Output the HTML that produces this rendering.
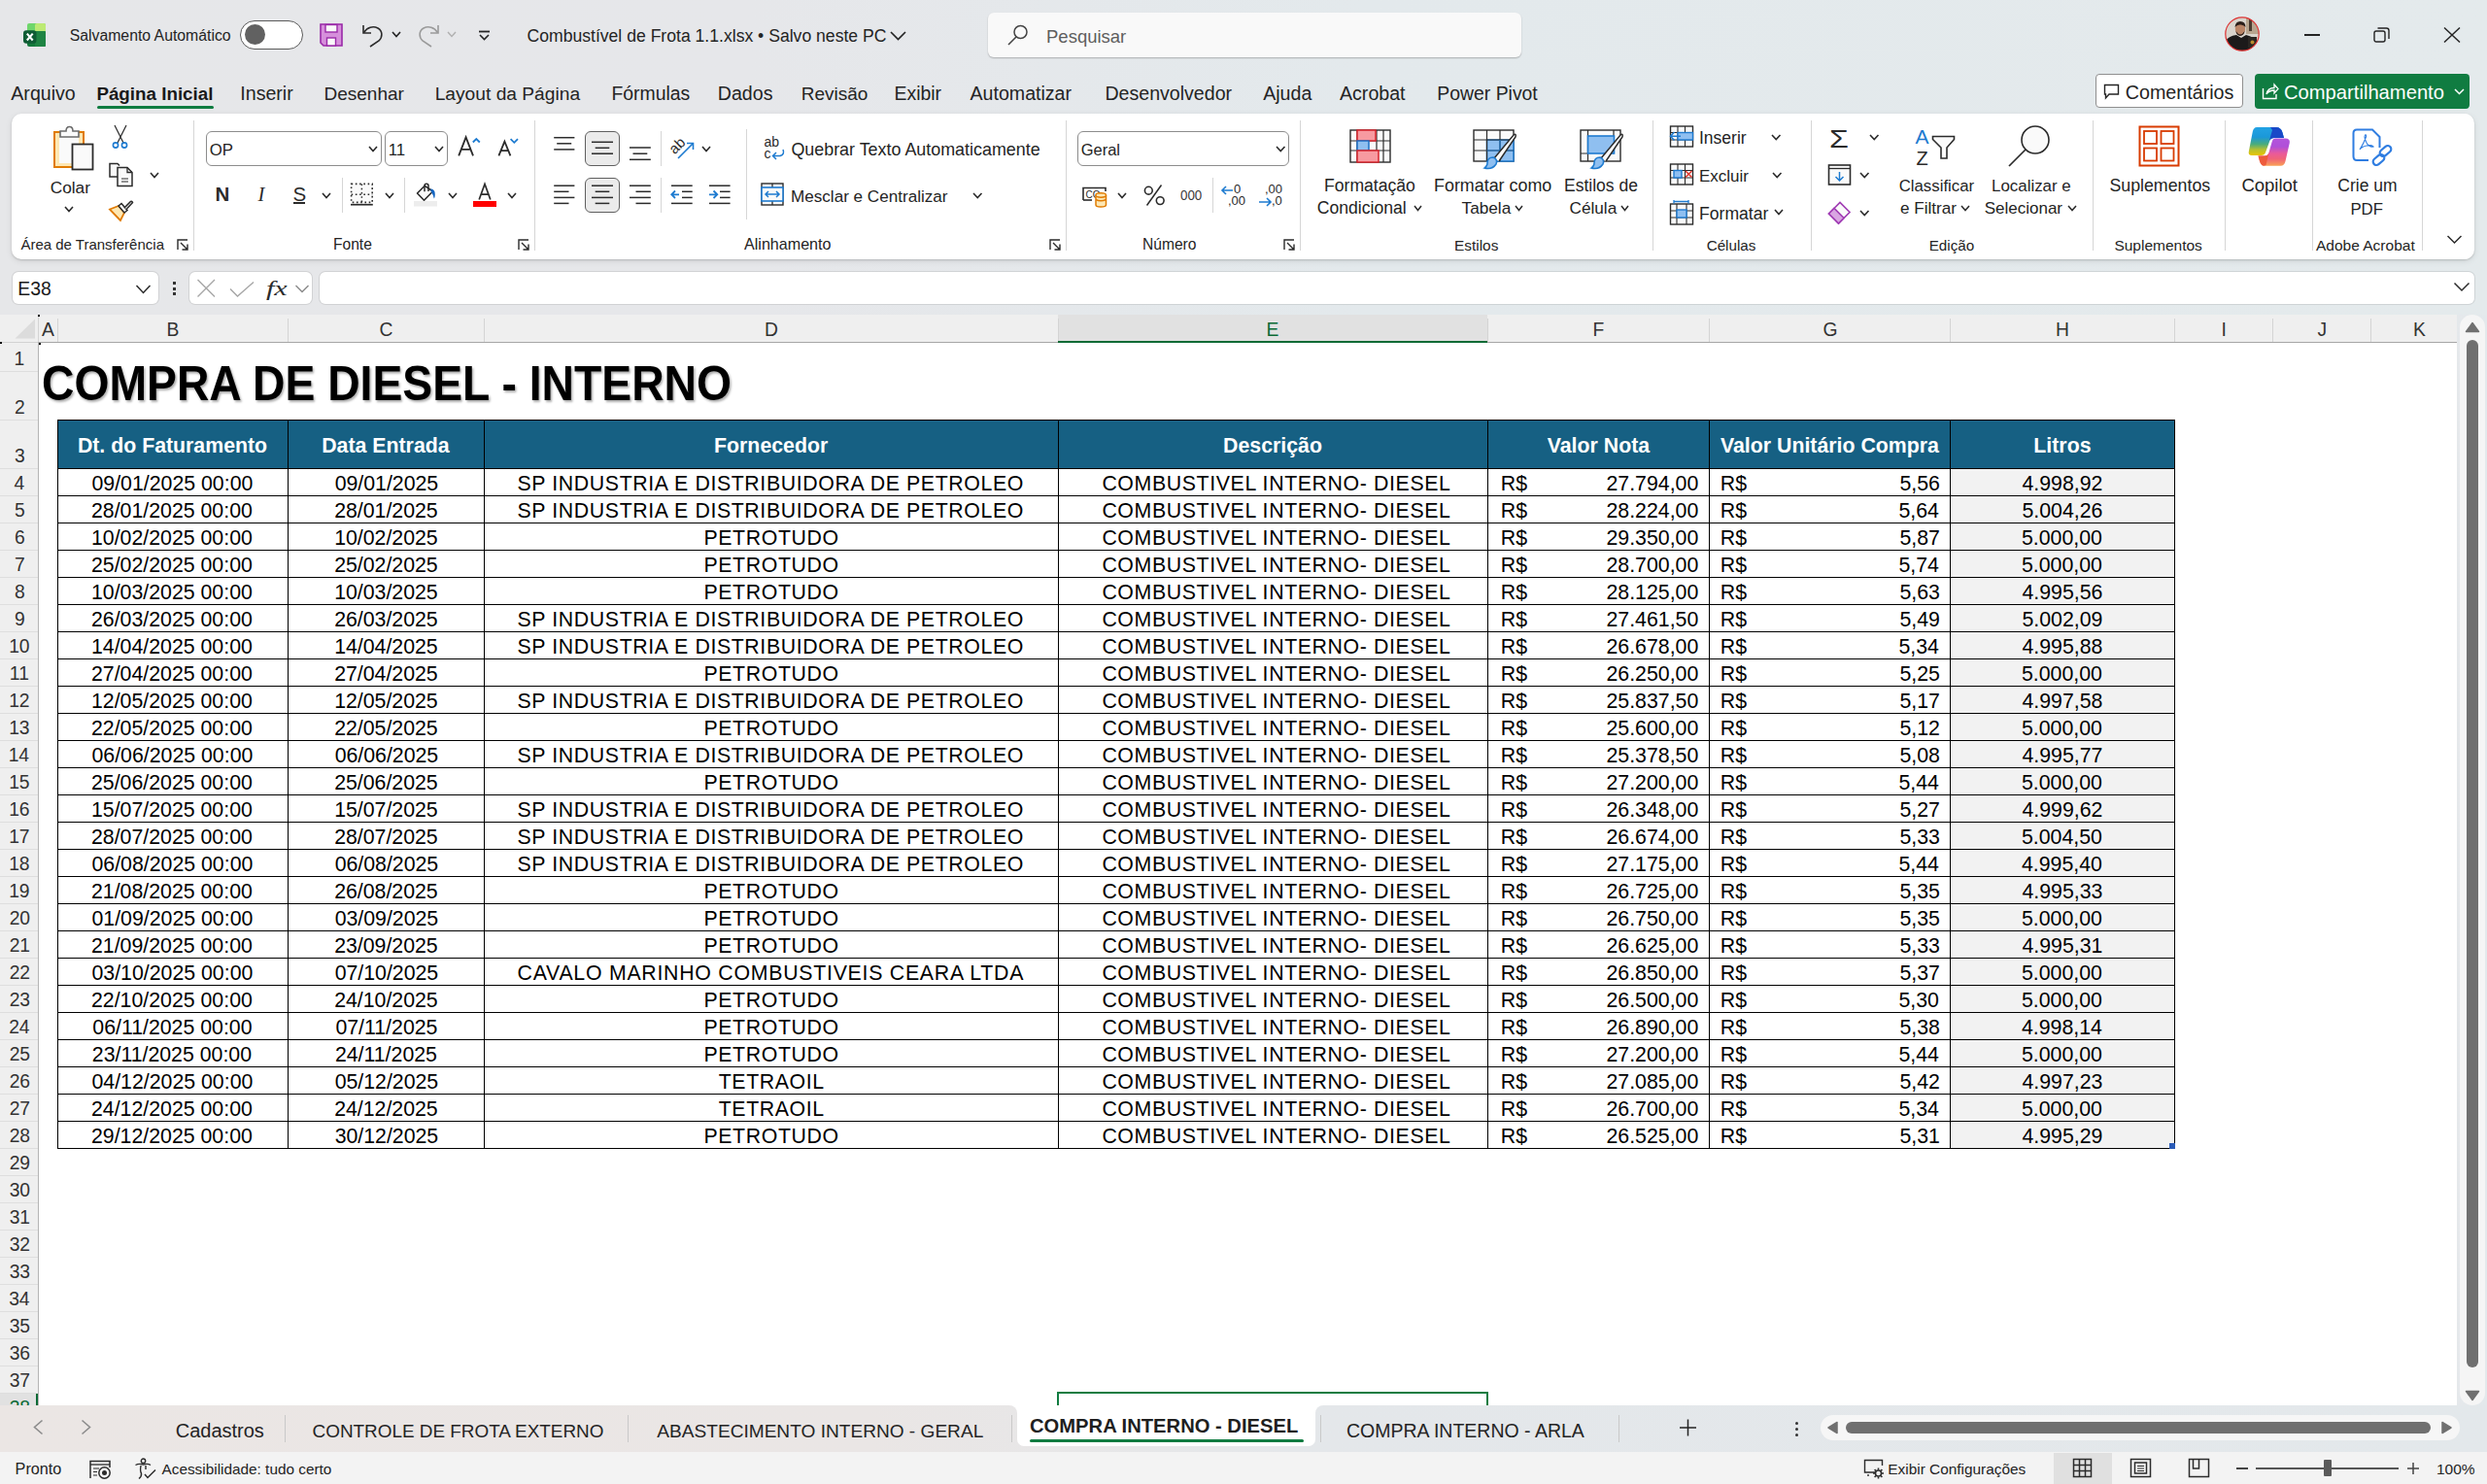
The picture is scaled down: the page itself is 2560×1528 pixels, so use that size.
<!DOCTYPE html><html><head><meta charset="utf-8"><style>
html,body{margin:0;padding:0;}
body{width:2560px;height:1528px;overflow:hidden;position:relative;background:linear-gradient(90deg,#e6e7e9 0%,#e6e7ea 30%,#e3e9ec 55%,#e4eaec 100%);font-family:'Liberation Sans',sans-serif;}
.t{position:absolute;white-space:pre;line-height:1;}
.r{position:absolute;}
.s{position:absolute;overflow:visible;}
</style></head><body><svg class="s" style="left:24px;top:24px;" width="24" height="24" viewBox="0 0 24 24">
<rect x="4" y="0" width="19" height="12" rx="2" fill="#6fd66b"/>
<rect x="12" y="0" width="11" height="12" rx="2" fill="#bdea74"/>
<rect x="4" y="8" width="19" height="16" rx="2" fill="#157a3c"/>
<rect x="12" y="8" width="11" height="16" rx="1" fill="#1f8443"/>
<rect x="0" y="7.3" width="13.5" height="13.5" rx="3" fill="#0f5c34"/>
<path d="M3.8 10.6 L9.7 17.5 M9.7 10.6 L3.8 17.5" stroke="#fff" stroke-width="2.1"/>
</svg><div class="t" style="left:71.70px;top:29px;font-size:15.8px;color:#242424;">Salvamento Automático</div><div class="r" style="left:247px;top:21px;width:63px;height:28px;border:1.2px solid #5a5a5a;border-radius:15px;background:#fff;"></div><div class="r" style="left:252px;top:25px;width:21px;height:21px;border-radius:50%;background:#616161;"></div><svg class="s" style="left:329px;top:24px;" width="24" height="24" viewBox="0 0 24 24">
<path d="M1 1 H23 V23 H4 L1 20 Z" fill="#d68fdb" stroke="#9a2aa8" stroke-width="1.6"/>
<rect x="6" y="1.5" width="12" height="7.5" fill="#fafafa" stroke="#9a2aa8" stroke-width="1.4"/>
<rect x="7.5" y="15" width="9" height="8" fill="#fafafa" stroke="#9a2aa8" stroke-width="1.4"/>
</svg><svg class="s" style="left:372px;top:23px;" width="24" height="26" viewBox="0 0 24 26"><path d="M2 3 V11 H10" fill="none" stroke="#2b2b2b" stroke-width="1.6"/>
<path d="M2.5 10.5 C6 5 12 3.5 17 6 C22 9 22 15 18 19 L9 25" fill="none" stroke="#2b2b2b" stroke-width="1.6"/></svg><svg class="s" style="left:403px;top:32px;" width="10" height="6.5" viewBox="0 0 10 6.5"><path d="M1 1 L5.0 5.5 L9 1" fill="none" stroke="#242424" stroke-width="1.6"/></svg><svg class="s" style="left:429px;top:23px;" width="24" height="26" viewBox="0 0 24 26"><path d="M22 3 V11 H14" fill="none" stroke="#9a9a9a" stroke-width="1.6"/>
<path d="M21.5 10.5 C18 5 12 3.5 7 6 C2 9 2 15 6 19 L15 25" fill="none" stroke="#9a9a9a" stroke-width="1.6"/></svg><svg class="s" style="left:460px;top:32px;" width="10" height="6.5" viewBox="0 0 10 6.5"><path d="M1 1 L5.0 5.5 L9 1" fill="none" stroke="#b0b0b0" stroke-width="1.4"/></svg><svg class="s" style="left:492px;top:31px;" width="14" height="11" viewBox="0 0 14 11"><path d="M1 1.5 H12" stroke="#242424" stroke-width="1.8"/><path d="M2 5 L6.5 9.5 L11 5" fill="none" stroke="#242424" stroke-width="1.6"/></svg><div class="t" style="left:542.50px;top:29px;font-size:17.6px;color:#242424;">Combustível de Frota 1.1.xlsx • Salvo neste PC</div><svg class="s" style="left:916px;top:32px;" width="17" height="9.5" viewBox="0 0 17 9.5"><path d="M1 1 L8.5 8.5 L16 1" fill="none" stroke="#242424" stroke-width="1.7"/></svg><div class="r" style="left:1017px;top:13px;width:549px;height:46px;border-radius:6px;background:#f9f9f9;box-shadow:0 1px 1.5px rgba(0,0,0,0.25);"></div><svg class="s" style="left:1036px;top:24px;" width="24" height="24" viewBox="0 0 24 24"><circle cx="14.5" cy="9" r="6.5" fill="none" stroke="#444" stroke-width="1.5"/><path d="M10 14 L2 22" stroke="#444" stroke-width="1.6"/></svg><div class="t" style="left:1077.00px;top:29px;font-size:18.5px;color:#5e5e5e;">Pesquisar</div><svg class="s" style="left:2290px;top:17px;" width="36" height="36" viewBox="0 0 36 36"><defs><clipPath id="av"><circle cx="18" cy="18" r="17.2"/></clipPath></defs>
<g clip-path="url(#av)"><rect width="36" height="36" fill="#d9d4cc"/><rect x="22" y="0" width="14" height="18" fill="#b7a58f"/><rect x="25" y="3" width="3" height="12" fill="#4a3b30"/>
<path d="M0 36 V26 Q4 20 12 19 L17 22 L22 19 Q30 21 36 27 V36 Z" fill="#1c1a1a"/>
<ellipse cx="16" cy="13" rx="5.2" ry="6.5" fill="#b98466"/><path d="M10.5 11 Q11 5 16 5 Q21.5 5 21.5 11 Q19 8 16 8.5 Q13 8 10.5 11 Z" fill="#2b1f1a"/>
<path d="M11.5 15 Q16 22 20.5 15 Q20 19.5 16 20 Q12 19.5 11.5 15 Z" fill="#2b1f1a"/>
<rect x="24" y="21" width="9" height="11" fill="#2a2622"/><circle cx="28.5" cy="26.5" r="2" fill="#b88a2e"/></g>
<circle cx="18" cy="18" r="17.2" fill="none" stroke="#d33" stroke-width="1.2"/></svg><div class="r" style="left:2372px;top:35px;width:16px;height:1.5px;background:#242424;"></div><svg class="s" style="left:2443px;top:28px;" width="17" height="16" viewBox="0 0 17 16"><rect x="1" y="4" width="11" height="11" rx="2" fill="none" stroke="#242424" stroke-width="1.4"/><path d="M4.5 1 H13.5 Q16 1 16 3.5 V12" fill="none" stroke="#242424" stroke-width="1.4"/></svg><svg class="s" style="left:2515px;top:28px;" width="18" height="16" viewBox="0 0 18 16"><path d="M1 0.5 L17 15.5 M17 0.5 L1 15.5" stroke="#242424" stroke-width="1.5"/></svg><div class="t" style="left:11.30px;top:87px;font-size:19.6px;color:#242424;">Arquivo</div><div class="t" style="left:99.40px;top:88px;font-size:18.8px;color:#1a1a1a;font-weight:700;">Página Inicial</div><div class="t" style="left:247.30px;top:87px;font-size:19.6px;color:#242424;">Inserir</div><div class="t" style="left:333.50px;top:87px;font-size:19.0px;color:#242424;">Desenhar</div><div class="t" style="left:447.70px;top:87px;font-size:19.2px;color:#242424;">Layout da Página</div><div class="t" style="left:629.40px;top:87px;font-size:19.4px;color:#242424;">Fórmulas</div><div class="t" style="left:738.80px;top:87px;font-size:19.6px;color:#242424;">Dados</div><div class="t" style="left:824.70px;top:87px;font-size:19.0px;color:#242424;">Revisão</div><div class="t" style="left:920.60px;top:87px;font-size:19.4px;color:#242424;">Exibir</div><div class="t" style="left:998.50px;top:87px;font-size:19.6px;color:#242424;">Automatizar</div><div class="t" style="left:1137.40px;top:87px;font-size:19.6px;color:#242424;">Desenvolvedor</div><div class="t" style="left:1300.20px;top:87px;font-size:19.6px;color:#242424;">Ajuda</div><div class="t" style="left:1379.00px;top:87px;font-size:19.6px;color:#242424;">Acrobat</div><div class="t" style="left:1479.30px;top:87px;font-size:19.4px;color:#242424;">Power Pivot</div><div class="r" style="left:100px;top:109px;width:120px;height:3px;background:#107c41;border-radius:2px;"></div><div class="r" style="left:2157px;top:76px;width:152px;height:35px;border:1px solid #8f8f8f;border-radius:4px;background:#fff;box-sizing:border-box;"></div><svg class="s" style="left:2165px;top:86px;" width="17" height="17" viewBox="0 0 17 17"><path d="M1.5 1.5 H15.5 V11 H6 L2.5 15 V11 H1.5 Z" fill="none" stroke="#242424" stroke-width="1.4"/></svg><div class="t" style="left:2187.80px;top:86px;font-size:19.7px;color:#242424;">Comentários</div><div class="r" style="left:2321px;top:76px;width:221px;height:36px;border-radius:4px;background:#107c41;"></div><svg class="s" style="left:2328px;top:85px;" width="18" height="18" viewBox="0 0 18 18"><path d="M1.5 6 V16.5 H15 V12" fill="none" stroke="#fff" stroke-width="1.4"/><path d="M5 12 C6 7 9 5.5 13 5.5 V2 L17 6.5 L13 11 V8 C10 8 7 9 5 12 Z" fill="none" stroke="#fff" stroke-width="1.3"/></svg><div class="t" style="left:2351.00px;top:85px;font-size:20.2px;color:#ffffff;">Compartilhamento</div><svg class="s" style="left:2526px;top:91px;" width="11" height="6.5" viewBox="0 0 11 6.5"><path d="M1 1 L5.5 5.5 L10 1" fill="none" stroke="#ffffff" stroke-width="1.5"/></svg><div class="r" style="left:12px;top:117px;width:2535px;height:150px;border-radius:10px;background:#fff;box-shadow:0 1px 2px rgba(0,0,0,0.16),0 2px 7px rgba(0,0,0,0.09);"></div><svg class="s" style="left:54px;top:129px;" width="44" height="47" viewBox="0 0 44 47">
<rect x="2" y="7" width="30" height="36" fill="#fde7b3" stroke="#e07b00" stroke-width="2"/>
<rect x="7" y="11" width="20" height="28" fill="#fafafa"/>
<path d="M8 12 V6 H14 Q14 1.5 17.5 1.5 Q21 1.5 21 6 H27 V12 Z" fill="#fafafa" stroke="#6b6b6b" stroke-width="1.6"/>
<rect x="20.5" y="19.5" width="21" height="26" fill="#fafafa" stroke="#2b2b2b" stroke-width="1.8"/>
</svg><div class="t" style="left:51.70px;top:185px;font-size:17.3px;color:#242424;">Colar</div><svg class="s" style="left:66px;top:212px;" width="10" height="6.5" viewBox="0 0 10 6.5"><path d="M1 1 L5.0 5.5 L9 1" fill="none" stroke="#2b2b2b" stroke-width="1.6"/></svg><svg class="s" style="left:114px;top:128px;" width="20" height="26" viewBox="0 0 20 26"><path d="M4 1 L13 19 M16 1 L7 19" stroke="#2b2b2b" stroke-width="1.2" fill="none"/>
<circle cx="5" cy="21.5" r="2.6" fill="none" stroke="#1e7bd0" stroke-width="1.6"/><circle cx="14" cy="21.5" r="2.6" fill="none" stroke="#1e7bd0" stroke-width="1.6"/></svg><svg class="s" style="left:111px;top:167px;" width="27" height="27" viewBox="0 0 27 27"><path d="M12 15 H2 V1.5 H10 L12 3.5" fill="#fafafa" stroke="#2b2b2b" stroke-width="1.5"/>
<path d="M10 5.5 H20 L25 10.5 V24.5 H10 Z" fill="#fafafa" stroke="#2b2b2b" stroke-width="1.5"/><path d="M20 5.5 V10.5 H25" fill="none" stroke="#2b2b2b" stroke-width="1.3"/>
<path d="M14 17 H21 M14 20 H21" stroke="#2b2b2b" stroke-width="1.2"/></svg><svg class="s" style="left:154px;top:177px;" width="10" height="6.5" viewBox="0 0 10 6.5"><path d="M1 1 L5.0 5.5 L9 1" fill="none" stroke="#2b2b2b" stroke-width="1.6"/></svg><svg class="s" style="left:111px;top:206px;" width="27" height="25" viewBox="0 0 27 25"><path d="M2 9.5 L11 6 L17 13 L13 21 Z" fill="#fde7b3" stroke="#e07b00" stroke-width="1.8"/>
<path d="M2 9.5 L13 21" stroke="#e07b00" stroke-width="1.2"/>
<path d="M11 6 L17 13 L20 10.5 L14 3.5 Z" fill="#fafafa" stroke="#2b2b2b" stroke-width="1.5"/>
<path d="M17 8 L23.5 1.5 Q25 1 25.5 2.5 L19.5 9" fill="#fafafa" stroke="#2b2b2b" stroke-width="1.5"/></svg><div class="t" style="left:21.40px;top:244px;font-size:15.0px;color:#242424;">Área de Transferência</div><svg class="s" style="left:182px;top:246px;" width="12" height="12" viewBox="0 0 12 12"><path d="M1 11 V1 H11" fill="none" stroke="#2b2b2b" stroke-width="1.4"/><path d="M4 4 L11 11 M11 5.5 V11 H5.5" fill="none" stroke="#2b2b2b" stroke-width="1.4"/></svg><div class="r" style="left:199px;top:124px;width:1px;height:134px;background:#d6d6d6;"></div><div class="r" style="left:212px;top:135px;width:181px;height:36px;border:1px solid #8c8c8c;border-radius:6px;box-sizing:border-box;background:#fff;"></div><div class="t" style="left:215.70px;top:147px;font-size:16.8px;color:#242424;">OP</div><svg class="s" style="left:379px;top:150px;" width="10" height="6.5" viewBox="0 0 10 6.5"><path d="M1 1 L5.0 5.5 L9 1" fill="none" stroke="#2b2b2b" stroke-width="1.6"/></svg><div class="r" style="left:396px;top:135px;width:65px;height:36px;border:1px solid #8c8c8c;border-radius:6px;box-sizing:border-box;background:#fff;"></div><div class="t" style="left:399.70px;top:147px;font-size:16.8px;color:#242424;">11</div><svg class="s" style="left:447px;top:150px;" width="10" height="6.5" viewBox="0 0 10 6.5"><path d="M1 1 L5.0 5.5 L9 1" fill="none" stroke="#2b2b2b" stroke-width="1.6"/></svg><svg class="s" style="left:462px;top:132px;" width="80" height="40" viewBox="0 0 80 40"><path d="M10.2 28.3 L17.6 9.3 L25 28.3 M12.9 21.9 H22.3" fill="none" stroke="#2b2b2b" stroke-width="1.8"/>
<path d="M24.8 14.5 L28.3 11 L31.8 14.5" fill="none" stroke="#1e7bd0" stroke-width="1.8"/>
<path d="M51.4 28.3 L57.4 13.6 L63.4 28.3 M53.5 23.2 H61.3" fill="none" stroke="#2b2b2b" stroke-width="1.8"/>
<path d="M63.6 11.2 L67.3 14.8 L71 11.2" fill="none" stroke="#1e7bd0" stroke-width="1.8"/></svg><div class="t" style="left:221.50px;top:190px;font-size:20.5px;color:#2b2b2b;font-weight:700;">N</div><div class="t" style="left:265.50px;top:190px;font-size:20.5px;color:#2b2b2b;font-style:italic;font-family:'Liberation Serif';">I</div><div class="t" style="left:301.50px;top:190px;font-size:20.5px;color:#2b2b2b;">S</div><div class="r" style="left:302px;top:208px;width:12px;height:1.6px;background:#2b2b2b;"></div><svg class="s" style="left:331px;top:198px;" width="10" height="6.5" viewBox="0 0 10 6.5"><path d="M1 1 L5.0 5.5 L9 1" fill="none" stroke="#2b2b2b" stroke-width="1.6"/></svg><div class="r" style="left:352px;top:183px;width:1px;height:36px;background:#d6d6d6;"></div><svg class="s" style="left:358px;top:186px;" width="30" height="30" viewBox="0 0 30 30"><g stroke="#2b2b2b" stroke-width="1.6" stroke-dasharray="1.6 2.65" fill="#fafafa"><rect x="3.6" y="3.4" width="21.6" height="19"/></g>
<g stroke="#2b2b2b" stroke-width="1.5" stroke-dasharray="1.6 2.65" fill="none"><path d="M14.4 3.4 V22.4 M3.6 14.2 H25.2"/></g>
<path d="M3 24.7 H25.8" stroke="#2b2b2b" stroke-width="1.7"/></svg><svg class="s" style="left:396px;top:198px;" width="10" height="6.5" viewBox="0 0 10 6.5"><path d="M1 1 L5.0 5.5 L9 1" fill="none" stroke="#2b2b2b" stroke-width="1.6"/></svg><div class="r" style="left:416px;top:183px;width:1px;height:36px;background:#d6d6d6;"></div><svg class="s" style="left:426px;top:186px;" width="26" height="28" viewBox="0 0 26 28"><path d="M3.5 13 L11.2 5.3 L19.6 11 L10.5 20.3 Z" fill="#fafafa" stroke="#2b2b2b" stroke-width="1.6" stroke-linejoin="round"/>
<path d="M11 11.3 V5.3 Q11 3.2 13 3.2 Q15 3.2 15 5.3 V11" fill="none" stroke="#2b2b2b" stroke-width="1.5"/>
<path d="M17 8.5 Q21.8 8.5 21.8 14 Q21.8 17 20.8 18.5 Q20.2 15 17.8 11.5 Z" fill="#1565c0"/>
<rect x="0" y="21" width="24" height="5.5" fill="#ededed"/></svg><svg class="s" style="left:461.4px;top:198px;" width="10" height="6.5" viewBox="0 0 10 6.5"><path d="M1 1 L5.0 5.5 L9 1" fill="none" stroke="#2b2b2b" stroke-width="1.6"/></svg><svg class="s" style="left:488px;top:186px;" width="22" height="22" viewBox="0 0 22 22"><path d="M5.2 19.5 L11 3.4 L16.8 19.5 M7.3 14.1 H14.7" fill="none" stroke="#2b2b2b" stroke-width="1.7"/></svg><div class="r" style="left:487px;top:207px;width:24px;height:5.5px;background:#ff0000;"></div><svg class="s" style="left:522px;top:198px;" width="10" height="6.5" viewBox="0 0 10 6.5"><path d="M1 1 L5.0 5.5 L9 1" fill="none" stroke="#2b2b2b" stroke-width="1.6"/></svg><div class="t" style="left:343.00px;top:244px;font-size:15.6px;color:#242424;">Fonte</div><svg class="s" style="left:533px;top:246px;" width="12" height="12" viewBox="0 0 12 12"><path d="M1 11 V1 H11" fill="none" stroke="#2b2b2b" stroke-width="1.4"/><path d="M4 4 L11 11 M11 5.5 V11 H5.5" fill="none" stroke="#2b2b2b" stroke-width="1.4"/></svg><div class="r" style="left:550px;top:124px;width:1px;height:134px;background:#d6d6d6;"></div><div class="r" style="left:602px;top:135px;width:36px;height:36px;border:1px solid #5f5f5f;border-radius:6px;box-sizing:border-box;background:#ebebeb;"></div><div class="r" style="left:602px;top:183px;width:36px;height:36px;border:1px solid #5f5f5f;border-radius:6px;box-sizing:border-box;background:#ebebeb;"></div><svg class="s" style="left:560px;top:130px;" width="200" height="100" viewBox="0 0 200 100"><path d="M10.2 11.7 H31.4" stroke="#2b2b2b" stroke-width="1.5"/><path d="M13.2 17.8 H28.2" stroke="#2b2b2b" stroke-width="1.5"/><path d="M10.2 23.9 H31.4" stroke="#2b2b2b" stroke-width="1.5"/><path d="M49 16.3 H71" stroke="#2b2b2b" stroke-width="1.5"/><path d="M52.7 22.3 H67.3" stroke="#2b2b2b" stroke-width="1.5"/><path d="M49 28.2 H71" stroke="#2b2b2b" stroke-width="1.5"/><path d="M88 22 H109.8" stroke="#2b2b2b" stroke-width="1.5"/><path d="M91.5 28.2 H106.3" stroke="#2b2b2b" stroke-width="1.5"/><path d="M88 34.3 H109.8" stroke="#2b2b2b" stroke-width="1.5"/><path d="M10.2 61.2 H31.4" stroke="#2b2b2b" stroke-width="1.5"/><path d="M10.2 67.3 H25.5" stroke="#2b2b2b" stroke-width="1.5"/><path d="M10.2 73.4 H31.4" stroke="#2b2b2b" stroke-width="1.5"/><path d="M10.2 79.4 H25.5" stroke="#2b2b2b" stroke-width="1.5"/><path d="M49 61.2 H71" stroke="#2b2b2b" stroke-width="1.5"/><path d="M52.7 67.3 H67.3" stroke="#2b2b2b" stroke-width="1.5"/><path d="M49 73.4 H71" stroke="#2b2b2b" stroke-width="1.5"/><path d="M52.7 79.4 H67.3" stroke="#2b2b2b" stroke-width="1.5"/><path d="M88 61.2 H109.8" stroke="#2b2b2b" stroke-width="1.5"/><path d="M94.5 67.3 H109.8" stroke="#2b2b2b" stroke-width="1.5"/><path d="M88 73.4 H109.8" stroke="#2b2b2b" stroke-width="1.5"/><path d="M94.5 79.4 H109.8" stroke="#2b2b2b" stroke-width="1.5"/><path d="M131 61.2 H152.7" stroke="#2b2b2b" stroke-width="1.5"/><path d="M142 67.3 H152.7" stroke="#2b2b2b" stroke-width="1.5"/><path d="M142 73.4 H152.7" stroke="#2b2b2b" stroke-width="1.5"/><path d="M131 79.4 H152.7" stroke="#2b2b2b" stroke-width="1.5"/><path d="M170 61.2 H191.6" stroke="#2b2b2b" stroke-width="1.5"/><path d="M181 67.3 H191.6" stroke="#2b2b2b" stroke-width="1.5"/><path d="M181 73.4 H191.6" stroke="#2b2b2b" stroke-width="1.5"/><path d="M170 79.4 H191.6" stroke="#2b2b2b" stroke-width="1.5"/><path d="M131.5 70.3 H139 M135 66.5 L131.3 70.3 L135 74" fill="none" stroke="#1e7bd0" stroke-width="1.8"/><path d="M170 70.3 H178 M174.5 66.5 L178.3 70.3 L174.5 74" fill="none" stroke="#1e7bd0" stroke-width="1.8"/></svg><div class="r" style="left:680px;top:135px;width:1px;height:36px;background:#d6d6d6;"></div><div class="r" style="left:680px;top:183px;width:1px;height:36px;background:#d6d6d6;"></div><svg class="s" style="left:689px;top:140px;" width="28" height="26" viewBox="0 0 28 26"><text x="0" y="0" transform="translate(5.5 19.5) rotate(-45)" font-family="Liberation Sans" font-size="15" fill="#2b2b2b">ab</text>
<path d="M9 23 L24 8 M18 7.5 H24.5 V14" fill="none" stroke="#1e7bd0" stroke-width="1.6"/></svg><svg class="s" style="left:722px;top:150px;" width="10" height="6.5" viewBox="0 0 10 6.5"><path d="M1 1 L5.0 5.5 L9 1" fill="none" stroke="#2b2b2b" stroke-width="1.6"/></svg><div class="r" style="left:768px;top:133px;width:1px;height:93px;background:#d6d6d6;"></div><svg class="s" style="left:786px;top:140px;" width="24" height="26" viewBox="0 0 24 26"><text x="0.5" y="11" font-family="Liberation Sans" font-size="14" fill="#2b2b2b">ab</text><text x="0.5" y="22.5" font-family="Liberation Sans" font-size="14" fill="#2b2b2b">c</text>
<path d="M20 14 Q22 19 17 20.5 H10 M13 17 L9.5 20.5 L13 24" fill="none" stroke="#1e7bd0" stroke-width="1.5"/></svg><div class="t" style="left:814.40px;top:146px;font-size:17.9px;color:#242424;">Quebrar Texto Automaticamente</div><svg class="s" style="left:783px;top:188px;" width="26" height="25" viewBox="0 0 26 25"><rect x="1" y="1" width="22" height="22" fill="#fafafa" stroke="#2b2b2b" stroke-width="1.4"/><path d="M12 1 V5 M12 19 V23" stroke="#2b2b2b" stroke-width="1.3"/>
<rect x="1" y="5" width="22" height="14" fill="#fafafa" stroke="#1e7bd0" stroke-width="1.6"/>
<path d="M5 12 H19 M8 9 L5 12 L8 15 M16 9 L19 12 L16 15" fill="none" stroke="#1e7bd0" stroke-width="1.5"/></svg><div class="t" style="left:814.00px;top:194px;font-size:17.1px;color:#242424;">Mesclar e Centralizar</div><svg class="s" style="left:1001px;top:198px;" width="10.5" height="6.5" viewBox="0 0 10.5 6.5"><path d="M1 1 L5.25 5.5 L9.5 1" fill="none" stroke="#2b2b2b" stroke-width="1.6"/></svg><div class="t" style="left:766.00px;top:243px;font-size:16.1px;color:#242424;">Alinhamento</div><svg class="s" style="left:1080px;top:246px;" width="12" height="12" viewBox="0 0 12 12"><path d="M1 11 V1 H11" fill="none" stroke="#2b2b2b" stroke-width="1.4"/><path d="M4 4 L11 11 M11 5.5 V11 H5.5" fill="none" stroke="#2b2b2b" stroke-width="1.4"/></svg><div class="r" style="left:1097px;top:124px;width:1px;height:134px;background:#d6d6d6;"></div><div class="r" style="left:1109px;top:135px;width:218px;height:36px;border:1px solid #8c8c8c;border-radius:6px;box-sizing:border-box;background:#fff;"></div><div class="t" style="left:1112.70px;top:146px;font-size:16.5px;color:#242424;">Geral</div><svg class="s" style="left:1313px;top:150px;" width="10.5" height="6.5" viewBox="0 0 10.5 6.5"><path d="M1 1 L5.25 5.5 L9.5 1" fill="none" stroke="#2b2b2b" stroke-width="1.6"/></svg><svg class="s" style="left:1114px;top:192px;" width="28" height="22" viewBox="0 0 28 22"><path d="M1 14 V1.5 H24 V5" fill="none" stroke="#2b2b2b" stroke-width="1.6"/><path d="M1 14 H10" stroke="#2b2b2b" stroke-width="1.6"/>
<text x="3.5" y="12" font-family="Liberation Sans" font-size="10" fill="#2b2b2b">CO</text>
<g fill="#fde7b3" stroke="#e07b00" stroke-width="1.5"><path d="M14 9 V19 Q14 21 19 21 Q24.5 21 24.5 19 V9"/><ellipse cx="19.2" cy="9" rx="5.3" ry="2.2"/><path d="M14 13.5 Q19 16 24.5 13.5" fill="none"/></g></svg><svg class="s" style="left:1150px;top:198px;" width="10" height="6.5" viewBox="0 0 10 6.5"><path d="M1 1 L5.0 5.5 L9 1" fill="none" stroke="#2b2b2b" stroke-width="1.6"/></svg><svg class="s" style="left:1174px;top:188px;" width="28" height="26" viewBox="0 0 28 26"><circle cx="8.3" cy="8.2" r="3.9" fill="none" stroke="#2b2b2b" stroke-width="1.6"/><circle cx="20.2" cy="18.6" r="3.9" fill="none" stroke="#2b2b2b" stroke-width="1.6"/><path d="M6.5 23.5 L21.5 2.5" stroke="#2b2b2b" stroke-width="1.5"/></svg><div class="t" style="left:1215.40px;top:193px;font-size:15.5px;color:#3c3c3c;transform:scaleX(0.8613);transform-origin:0 0;">000</div><div class="r" style="left:1248px;top:183px;width:1px;height:36px;background:#d6d6d6;"></div><svg class="s" style="left:1256px;top:188px;" width="28" height="26" viewBox="0 0 28 26"><text x="14" y="11" font-family="Liberation Sans" font-size="13" fill="#2b2b2b">0</text><text x="8" y="23" font-family="Liberation Sans" font-size="13" fill="#2b2b2b">,00</text>
<path d="M2 8 H13 M6 4 L2 8 L6 12" fill="none" stroke="#1e7bd0" stroke-width="1.6"/></svg><svg class="s" style="left:1295px;top:188px;" width="28" height="26" viewBox="0 0 28 26"><text x="7" y="11" font-family="Liberation Sans" font-size="13" fill="#2b2b2b">,00</text><text x="14" y="23" font-family="Liberation Sans" font-size="13" fill="#2b2b2b">,0</text>
<path d="M1 20 H13 M9 16 L13 20 L9 24" fill="none" stroke="#1e7bd0" stroke-width="1.6"/></svg><div class="t" style="left:1176.00px;top:244px;font-size:15.6px;color:#242424;">Número</div><svg class="s" style="left:1321px;top:246px;" width="12" height="12" viewBox="0 0 12 12"><path d="M1 11 V1 H11" fill="none" stroke="#2b2b2b" stroke-width="1.4"/><path d="M4 4 L11 11 M11 5.5 V11 H5.5" fill="none" stroke="#2b2b2b" stroke-width="1.4"/></svg><div class="r" style="left:1338px;top:124px;width:1px;height:134px;background:#d6d6d6;"></div><svg class="s" style="left:1389px;top:133px;" width="44" height="36" viewBox="0 0 44 36"><g fill="#fafafa" stroke="#2b2b2b" stroke-width="1.4"><rect x="1" y="1" width="41" height="33"/></g>
<path d="M8 1 V34 M28 1 V34 M35 1 V34 M1 12 H42 M1 22 H42" stroke="#2b2b2b" stroke-width="1.2"/>
<rect x="8" y="1" width="19" height="11" fill="#f79aa0" stroke="#d8242c" stroke-width="1.5"/>
<rect x="8" y="12" width="12" height="10" fill="#8fbff0" stroke="#1e6fc4" stroke-width="1.5"/>
<rect x="8" y="22" width="22" height="12" fill="#f79aa0" stroke="#d8242c" stroke-width="1.5"/></svg><div class="t" style="left:1363.00px;top:183px;font-size:17.6px;color:#242424;">Formatação</div><div class="t" style="left:1355.80px;top:206px;font-size:17.6px;color:#242424;">Condicional</div><svg class="s" style="left:1454.5px;top:210.5px;" width="9" height="6.5" viewBox="0 0 9 6.5"><path d="M1 1 L4.5 5.5 L8 1" fill="none" stroke="#2b2b2b" stroke-width="1.5"/></svg><svg class="s" style="left:1516px;top:133px;" width="47" height="43" viewBox="0 0 47 43"><rect x="1" y="1" width="41" height="32" fill="#fafafa" stroke="#2b2b2b" stroke-width="1.4"/>
<rect x="14.5" y="11" width="27.5" height="22" fill="#8fbff0" stroke="#1e7bd0" stroke-width="1.5"/>
<path d="M14.5 1 V33 M28 1 V33 M1 11 H42 M1 22 H42" stroke="#2b2b2b" stroke-width="1.2"/>
<path d="M28 33 V11 M14.5 22 H42" stroke="#1e7bd0" stroke-width="1.2"/>
<path d="M22 30 L42 6 Q45 4 44 8 L27 33" fill="#fafafa" stroke="#2b2b2b" stroke-width="1.5"/>
<path d="M12 40 Q20 42 24 36 Q26 31 21 29 Q15 29 15 35 Q15 38 12 40 Z" fill="#8fbff0" stroke="#1e7bd0" stroke-width="1.5"/></svg><div class="t" style="left:1476.00px;top:183px;font-size:17.9px;color:#242424;">Formatar como</div><div class="t" style="left:1504.60px;top:206px;font-size:17.2px;color:#242424;">Tabela</div><svg class="s" style="left:1559px;top:210.5px;" width="9" height="6.5" viewBox="0 0 9 6.5"><path d="M1 1 L4.5 5.5 L8 1" fill="none" stroke="#2b2b2b" stroke-width="1.5"/></svg><svg class="s" style="left:1626px;top:133px;" width="47" height="43" viewBox="0 0 47 43"><rect x="1" y="1" width="41" height="32" fill="#fafafa" stroke="#2b2b2b" stroke-width="1.4"/>
<path d="M8.5 1 V33 M35 1 V11 M1 25 H8.5" stroke="#2b2b2b" stroke-width="1.2"/>
<rect x="8.5" y="7" width="27" height="18" fill="#8fbff0" stroke="#1e7bd0" stroke-width="1.6"/>
<path d="M22 30 L42 6 Q45 4 44 8 L27 33" fill="#fafafa" stroke="#2b2b2b" stroke-width="1.5"/>
<path d="M12 40 Q20 42 24 36 Q26 31 21 29 Q15 29 15 35 Q15 38 12 40 Z" fill="#8fbff0" stroke="#1e7bd0" stroke-width="1.5"/></svg><div class="t" style="left:1610.00px;top:183px;font-size:17.5px;color:#242424;">Estilos de</div><div class="t" style="left:1615.50px;top:206px;font-size:17.2px;color:#242424;">Célula</div><svg class="s" style="left:1667.5px;top:210.5px;" width="9" height="6.5" viewBox="0 0 9 6.5"><path d="M1 1 L4.5 5.5 L8 1" fill="none" stroke="#2b2b2b" stroke-width="1.5"/></svg><div class="t" style="left:1497.00px;top:245px;font-size:15.4px;color:#242424;">Estilos</div><div class="r" style="left:1701px;top:124px;width:1px;height:134px;background:#d6d6d6;"></div><svg class="s" style="left:1718px;top:129px;" width="27" height="24" viewBox="0 0 27 24"><rect x="1.5" y="1" width="23" height="21" fill="#fafafa" stroke="#2b2b2b" stroke-width="1.4"/>
<path d="M9 1 V22 M16.5 1 V22 M1.5 7.5 H24.5 M1.5 15 H24.5" stroke="#2b2b2b" stroke-width="1.1"/>
<rect x="9" y="7.5" width="15.5" height="7.5" fill="#8fbff0" stroke="#1e7bd0" stroke-width="1.4"/>
<path d="M1.5 11.2 H12 M5.5 7 L1.5 11.2 L5.5 15.5" fill="none" stroke="#1e7bd0" stroke-width="1.5"/></svg><div class="t" style="left:1749.00px;top:134px;font-size:17.5px;color:#242424;">Inserir</div><svg class="s" style="left:1823px;top:138px;" width="10.5" height="6.5" viewBox="0 0 10.5 6.5"><path d="M1 1 L5.25 5.5 L9.5 1" fill="none" stroke="#2b2b2b" stroke-width="1.6"/></svg><svg class="s" style="left:1718px;top:168px;" width="27" height="24" viewBox="0 0 27 24"><rect x="1.5" y="1" width="23" height="21" fill="#fafafa" stroke="#2b2b2b" stroke-width="1.4"/>
<path d="M9 1 V22 M16.5 1 V22 M1.5 7.5 H24.5 M1.5 15 H24.5" stroke="#2b2b2b" stroke-width="1.1"/>
<rect x="5" y="7.5" width="8" height="7.5" fill="#8fbff0" stroke="#1e7bd0" stroke-width="1.4"/>
<path d="M17 8 L23.5 14.5 M23.5 8 L17 14.5" stroke="#e0362c" stroke-width="1.5"/></svg><div class="t" style="left:1749.00px;top:173px;font-size:17.0px;color:#242424;">Excluir</div><svg class="s" style="left:1824px;top:177px;" width="10.5" height="6.5" viewBox="0 0 10.5 6.5"><path d="M1 1 L5.25 5.5 L9.5 1" fill="none" stroke="#2b2b2b" stroke-width="1.6"/></svg><svg class="s" style="left:1718px;top:206px;" width="27" height="26" viewBox="0 0 27 26"><rect x="1.5" y="4" width="23" height="21" fill="#fafafa" stroke="#2b2b2b" stroke-width="1.4"/>
<path d="M8 4 V25 M18 4 V25 M1.5 11 H24.5 M1.5 18 H24.5" stroke="#2b2b2b" stroke-width="1.1"/>
<rect x="8" y="10" width="10" height="8" fill="#8fbff0" stroke="#1e7bd0" stroke-width="1.4"/>
<path d="M5 1.5 H20 M5 0 V3.5 M20 0 V3.5" stroke="#1e7bd0" stroke-width="1.3"/></svg><div class="t" style="left:1749.00px;top:212px;font-size:17.6px;color:#242424;">Formatar</div><svg class="s" style="left:1826px;top:215px;" width="10" height="6.5" viewBox="0 0 10 6.5"><path d="M1 1 L5.0 5.5 L9 1" fill="none" stroke="#2b2b2b" stroke-width="1.6"/></svg><div class="t" style="left:1756.70px;top:245px;font-size:15.2px;color:#242424;">Células</div><div class="r" style="left:1864px;top:124px;width:1px;height:134px;background:#d6d6d6;"></div><div class="t" style="left:1883.41px;top:131px;font-size:25px;color:#2b2b2b;transform:scaleX(1.2857);transform-origin:0 0;">Σ</div><svg class="s" style="left:1924px;top:138px;" width="10.5" height="6.5" viewBox="0 0 10.5 6.5"><path d="M1 1 L5.25 5.5 L9.5 1" fill="none" stroke="#2b2b2b" stroke-width="1.6"/></svg><svg class="s" style="left:1881px;top:169px;" width="26" height="23" viewBox="0 0 26 23"><rect x="1.5" y="1" width="22" height="20" fill="#fafafa" stroke="#2b2b2b" stroke-width="1.6"/><path d="M1.5 4.5 H23.5" stroke="#2b2b2b" stroke-width="1.3"/>
<path d="M12.5 8 V17 M8.5 13 L12.5 17 L16.5 13" fill="none" stroke="#1e7bd0" stroke-width="1.5"/></svg><svg class="s" style="left:1914px;top:177px;" width="10.5" height="6.5" viewBox="0 0 10.5 6.5"><path d="M1 1 L5.25 5.5 L9.5 1" fill="none" stroke="#2b2b2b" stroke-width="1.6"/></svg><svg class="s" style="left:1881px;top:207px;" width="25" height="25" viewBox="0 0 25 25"><path d="M1.5 13 L13 1.5 L23 11.5 L11.5 23 Z" fill="#fafafa" stroke="#a03cb4" stroke-width="1.6"/>
<path d="M1.5 13 L7 7.5 L17 17.5 L11.5 23 Z" fill="#d9a6e2" stroke="#a03cb4" stroke-width="1.6"/></svg><svg class="s" style="left:1914px;top:215.5px;" width="10.5" height="6.5" viewBox="0 0 10.5 6.5"><path d="M1 1 L5.25 5.5 L9.5 1" fill="none" stroke="#2b2b2b" stroke-width="1.6"/></svg><div class="t" style="left:1971.50px;top:130px;font-size:21px;color:#1e7bd0;">A</div><div class="t" style="left:1972.50px;top:153px;font-size:20px;color:#2b2b2b;">Z</div><svg class="s" style="left:1988px;top:139px;" width="26" height="26" viewBox="0 0 26 26"><path d="M1.5 1.5 H23.5 V4.5 L16 13 V24 H10 V13 L1.5 4.5 Z" fill="#fafafa" stroke="#2b2b2b" stroke-width="1.6"/></svg><div class="t" style="left:1954.70px;top:184px;font-size:16.8px;color:#242424;">Classificar</div><div class="t" style="left:1956.00px;top:206px;font-size:17.1px;color:#242424;">e Filtrar</div><svg class="s" style="left:2018px;top:210.5px;" width="10" height="6.5" viewBox="0 0 10 6.5"><path d="M1 1 L5.0 5.5 L9 1" fill="none" stroke="#2b2b2b" stroke-width="1.5"/></svg><svg class="s" style="left:2066px;top:129px;" width="46" height="46" viewBox="0 0 46 46"><circle cx="29" cy="15" r="14" fill="#fafafa" stroke="#2b2b2b" stroke-width="1.6"/><path d="M19 25 L2 42" stroke="#2b2b2b" stroke-width="1.7"/></svg><div class="t" style="left:2050.00px;top:184px;font-size:16.9px;color:#242424;">Localizar e</div><div class="t" style="left:2042.70px;top:206px;font-size:17.0px;color:#242424;">Selecionar</div><svg class="s" style="left:2127.5px;top:210.5px;" width="10" height="6.5" viewBox="0 0 10 6.5"><path d="M1 1 L5.0 5.5 L9 1" fill="none" stroke="#2b2b2b" stroke-width="1.5"/></svg><div class="t" style="left:1985.70px;top:245px;font-size:15.2px;color:#242424;">Edição</div><div class="r" style="left:2154px;top:124px;width:1px;height:134px;background:#d6d6d6;"></div><svg class="s" style="left:2201px;top:129px;" width="44" height="44" viewBox="0 0 44 44"><rect x="1.5" y="1.5" width="40" height="40" fill="none" stroke="#d83b01" stroke-width="2"/>
<g fill="none" stroke="#d83b01" stroke-width="1.8"><rect x="6" y="6" width="13" height="13"/><rect x="23.5" y="6" width="13" height="13"/><rect x="6" y="23.5" width="13" height="13"/><rect x="23.5" y="23.5" width="13" height="13"/></g></svg><div class="t" style="left:2171.40px;top:183px;font-size:17.8px;color:#242424;">Suplementos</div><div class="t" style="left:2176.40px;top:245px;font-size:15.5px;color:#242424;">Suplementos</div><div class="r" style="left:2290px;top:124px;width:1px;height:134px;background:#d6d6d6;"></div><svg class="s" style="left:2308px;top:126px;" width="56" height="50" viewBox="0 0 56 50"><defs><linearGradient id="cpa" x1="0" y1="0" x2="0" y2="1"><stop offset="0" stop-color="#22a2e4"/><stop offset="0.35" stop-color="#1b98d8"/><stop offset="0.6" stop-color="#4aac7c"/><stop offset="0.8" stop-color="#b8c030"/><stop offset="1" stop-color="#e9c500"/></linearGradient>
<linearGradient id="cpb" x1="0" y1="0" x2="0" y2="1"><stop offset="0" stop-color="#b255dc"/><stop offset="0.3" stop-color="#b050d8"/><stop offset="0.55" stop-color="#ea5a9a"/><stop offset="0.75" stop-color="#f06478"/><stop offset="1" stop-color="#f9a155"/></linearGradient></defs>
<path d="M15 5 H35 Q40 5 41.5 10.5 L43 16 H33 Q29 16 28 20 L24 31 Q23 34 19.5 34 H10 Q6 34 6.8 30 L10.8 9.5 Q11.8 5 15 5 Z" fill="url(#cpa)"/>
<path d="M29 5 H35 Q40 5 41.5 10.5 L43 16 H33 Q29.5 16 28 18.5 L31 8 Q29.5 5.5 29 5 Z" fill="#1848c8"/>
<path d="M34 16.5 H44.5 Q49.5 16.5 48.8 21 L44.5 40 Q43.5 44.8 39.5 44.8 H24 Q19.5 44.8 18 40 L16.5 34.5 H23 Q26.5 34.5 27.5 31 L30.5 20.5 Q31.5 16.5 34 16.5 Z" fill="url(#cpb)"/>
<path d="M16.5 34.5 H23 Q26.5 34.5 27.5 31 L24.5 44 Q23 44.8 22 44.8 Q19.5 44.8 18 40 Z" fill="#ee5b3c"/></svg><div class="t" style="left:2307.40px;top:182px;font-size:18.5px;color:#242424;">Copilot</div><div class="r" style="left:2380px;top:124px;width:1px;height:134px;background:#d6d6d6;"></div><svg class="s" style="left:2421px;top:132px;" width="42" height="45" viewBox="0 0 42 45"><path d="M5 1.5 H21 L28.5 9 V20" fill="none" stroke="#2f7de1" stroke-width="2"/>
<path d="M17 33 H5 Q1.5 33 1.5 29 V5 Q1.5 1.5 5 1.5" fill="none" stroke="#2f7de1" stroke-width="2"/>
<path d="M8 22 Q12 16 14.5 9 Q15 6 13.5 7 Q12 9 15 15 Q18 20 22 19 Q20 17 15 18 Q10 19 8 22 Z" fill="none" stroke="#2f7de1" stroke-width="1.1"/>
<g fill="none" stroke="#2f7de1" stroke-width="2.2"><rect x="21" y="29" width="13" height="7" rx="3.5" transform="rotate(-40 27.5 32.5)"/><rect x="28" y="20" width="13" height="7" rx="3.5" transform="rotate(-40 34.5 23.5)"/></g></svg><div class="t" style="left:2406.30px;top:183px;font-size:17.5px;color:#242424;">Crie um</div><div class="t" style="left:2419.40px;top:208px;font-size:16.8px;color:#242424;">PDF</div><div class="t" style="left:2384.00px;top:245px;font-size:15.5px;color:#242424;">Adobe Acrobat</div><div class="r" style="left:2493px;top:124px;width:1px;height:134px;background:#d6d6d6;"></div><svg class="s" style="left:2518px;top:241px;" width="17" height="11" viewBox="0 0 17 11"><path d="M1.5 2 L8.5 9 L15.5 2" fill="none" stroke="#2b2b2b" stroke-width="1.5"/></svg><div class="r" style="left:13px;top:280px;width:150px;height:33px;border-radius:6px;background:#fff;box-shadow:0 0 0 1px rgba(0,0,0,0.09);"></div><div class="t" style="left:18.30px;top:288px;font-size:19.4px;color:#1a1a1a;">E38</div><svg class="s" style="left:139px;top:292px;" width="17" height="12" viewBox="0 0 17 12"><path d="M1.5 2 L8.5 9.5 L15.5 2" fill="none" stroke="#2b2b2b" stroke-width="1.5"/></svg><div class="r" style="left:177.5px;top:290px;width:3px;height:3px;background:#333;"></div><div class="r" style="left:177.5px;top:295.5px;width:3px;height:3px;background:#333;"></div><div class="r" style="left:177.5px;top:301px;width:3px;height:3px;background:#333;"></div><div class="r" style="left:195px;top:280px;width:126px;height:33px;border-radius:6px;background:#fff;box-shadow:0 0 0 1px rgba(0,0,0,0.09);"></div><svg class="s" style="left:202px;top:287px;" width="21" height="20" viewBox="0 0 21 20"><path d="M1.5 1 L19 18.5 M19 1 L1.5 18.5" stroke="#a6a6a6" stroke-width="1.4"/></svg><svg class="s" style="left:236px;top:289px;" width="27" height="18" viewBox="0 0 27 18"><path d="M1 8.5 L8.5 16 L25 1.5" fill="none" stroke="#a6a6a6" stroke-width="1.4"/></svg><div class="t" style="left:274.00px;top:286px;font-size:22px;color:#2b2b2b;font-style:italic;font-family:'Liberation Serif';transform:scaleX(1.3654);transform-origin:0 0;">fx</div><svg class="s" style="left:303px;top:292px;" width="17" height="11" viewBox="0 0 17 11"><path d="M1.5 2 L8 8.5 L14.5 2" fill="none" stroke="#8a8a8a" stroke-width="1.4"/></svg><div class="r" style="left:329px;top:280px;width:2218px;height:33px;border-radius:6px;background:#fff;box-shadow:0 0 0 1px rgba(0,0,0,0.09);"></div><svg class="s" style="left:2525px;top:290px;" width="18" height="11" viewBox="0 0 18 11"><path d="M1.5 1.5 L9 9 L16.5 1.5" fill="none" stroke="#2b2b2b" stroke-width="1.5"/></svg><div class="r" style="left:39px;top:353px;width:2490px;height:1094px;background:#ffffff;"></div><div class="r" style="left:0px;top:324px;width:2529px;height:28px;background:#efefef;"></div><div class="r" style="left:0px;top:353px;width:39px;height:1094px;background:#efefef;"></div><svg class="s" style="left:15px;top:328px;" width="22" height="21" viewBox="0 0 22 21"><path d="M21 0.5 V20.5 H0.5 Z" fill="#dcdcdc"/></svg><div class="r" style="left:1089px;top:324px;width:442px;height:28px;background:#e1e1e1;"></div><div class="r" style="left:59px;top:328px;width:1px;height:24px;background:#d4d4d4;"></div><div class="r" style="left:296px;top:328px;width:1px;height:24px;background:#d4d4d4;"></div><div class="r" style="left:498px;top:328px;width:1px;height:24px;background:#d4d4d4;"></div><div class="r" style="left:1089px;top:328px;width:1px;height:24px;background:#d4d4d4;"></div><div class="r" style="left:1531px;top:328px;width:1px;height:24px;background:#d4d4d4;"></div><div class="r" style="left:1759px;top:328px;width:1px;height:24px;background:#d4d4d4;"></div><div class="r" style="left:2007px;top:328px;width:1px;height:24px;background:#d4d4d4;"></div><div class="r" style="left:2238px;top:328px;width:1px;height:24px;background:#d4d4d4;"></div><div class="r" style="left:2339px;top:328px;width:1px;height:24px;background:#d4d4d4;"></div><div class="r" style="left:2440px;top:328px;width:1px;height:24px;background:#d4d4d4;"></div><div class="r" style="left:39px;top:324px;width:1px;height:28px;background:#d4d4d4;"></div><div class="r" style="left:39px;top:352px;width:2490px;height:1px;background:#a6a6a6;"></div><div class="r" style="left:0px;top:352px;width:39px;height:1px;background:#d2d2d2;"></div><div class="r" style="left:39px;top:324px;width:2px;height:2px;background:#000;"></div><div class="r" style="left:0px;top:352px;width:2px;height:2px;background:#000;"></div><div class="r" style="left:40px;top:353px;width:2px;height:2px;background:#000;"></div><div class="r" style="left:1089px;top:351px;width:442px;height:2px;background:#0b6a35;"></div><div class="r" style="left:39px;top:352px;width:1px;height:1095px;background:#b4b4b4;"></div><div class="t" style="left:43.00px;top:330px;font-size:19.3px;color:#333333;">A</div><div class="t" style="left:171.50px;top:330px;font-size:19.3px;color:#333333;">B</div><div class="t" style="left:390.50px;top:330px;font-size:19.3px;color:#333333;">C</div><div class="t" style="left:787.00px;top:330px;font-size:19.3px;color:#333333;">D</div><div class="t" style="left:1303.50px;top:330px;font-size:19.3px;color:#0b6a35;">E</div><div class="t" style="left:1639.50px;top:330px;font-size:19.3px;color:#333333;">F</div><div class="t" style="left:1876.50px;top:330px;font-size:19.3px;color:#333333;">G</div><div class="t" style="left:2116.00px;top:330px;font-size:19.3px;color:#333333;">H</div><div class="t" style="left:2286.50px;top:330px;font-size:19.3px;color:#333333;">I</div><div class="t" style="left:2385.50px;top:330px;font-size:19.3px;color:#333333;">J</div><div class="t" style="left:2484.00px;top:330px;font-size:19.3px;color:#333333;">K</div><div class="r" style="left:0px;top:382px;width:39px;height:1px;background:#dedede;"></div><div class="t" style="left:14.50px;top:360px;font-size:19.3px;color:#333333;">1</div><div class="r" style="left:0px;top:432px;width:39px;height:1px;background:#dedede;"></div><div class="t" style="left:15.00px;top:410px;font-size:19.3px;color:#333333;">2</div><div class="r" style="left:0px;top:482px;width:39px;height:1px;background:#dedede;"></div><div class="t" style="left:15.00px;top:460px;font-size:19.3px;color:#333333;">3</div><div class="r" style="left:0px;top:510px;width:39px;height:1px;background:#dedede;"></div><div class="t" style="left:14.50px;top:488px;font-size:19.3px;color:#333333;">4</div><div class="r" style="left:0px;top:538px;width:39px;height:1px;background:#dedede;"></div><div class="t" style="left:15.00px;top:516px;font-size:19.3px;color:#333333;">5</div><div class="r" style="left:0px;top:566px;width:39px;height:1px;background:#dedede;"></div><div class="t" style="left:15.00px;top:544px;font-size:19.3px;color:#333333;">6</div><div class="r" style="left:0px;top:594px;width:39px;height:1px;background:#dedede;"></div><div class="t" style="left:15.00px;top:572px;font-size:19.3px;color:#333333;">7</div><div class="r" style="left:0px;top:622px;width:39px;height:1px;background:#dedede;"></div><div class="t" style="left:15.00px;top:600px;font-size:19.3px;color:#333333;">8</div><div class="r" style="left:0px;top:650px;width:39px;height:1px;background:#dedede;"></div><div class="t" style="left:15.00px;top:628px;font-size:19.3px;color:#333333;">9</div><div class="r" style="left:0px;top:678px;width:39px;height:1px;background:#dedede;"></div><div class="t" style="left:9.14px;top:656px;font-size:19.3px;color:#333333;">10</div><div class="r" style="left:0px;top:706px;width:39px;height:1px;background:#dedede;"></div><div class="t" style="left:9.85px;top:684px;font-size:19.3px;color:#333333;">11</div><div class="r" style="left:0px;top:734px;width:39px;height:1px;background:#dedede;"></div><div class="t" style="left:9.14px;top:712px;font-size:19.3px;color:#333333;">12</div><div class="r" style="left:0px;top:762px;width:39px;height:1px;background:#dedede;"></div><div class="t" style="left:9.14px;top:740px;font-size:19.3px;color:#333333;">13</div><div class="r" style="left:0px;top:790px;width:39px;height:1px;background:#dedede;"></div><div class="t" style="left:8.64px;top:768px;font-size:19.3px;color:#333333;">14</div><div class="r" style="left:0px;top:818px;width:39px;height:1px;background:#dedede;"></div><div class="t" style="left:9.14px;top:796px;font-size:19.3px;color:#333333;">15</div><div class="r" style="left:0px;top:846px;width:39px;height:1px;background:#dedede;"></div><div class="t" style="left:9.14px;top:824px;font-size:19.3px;color:#333333;">16</div><div class="r" style="left:0px;top:874px;width:39px;height:1px;background:#dedede;"></div><div class="t" style="left:9.14px;top:852px;font-size:19.3px;color:#333333;">17</div><div class="r" style="left:0px;top:902px;width:39px;height:1px;background:#dedede;"></div><div class="t" style="left:9.14px;top:880px;font-size:19.3px;color:#333333;">18</div><div class="r" style="left:0px;top:930px;width:39px;height:1px;background:#dedede;"></div><div class="t" style="left:9.14px;top:908px;font-size:19.3px;color:#333333;">19</div><div class="r" style="left:0px;top:958px;width:39px;height:1px;background:#dedede;"></div><div class="t" style="left:9.64px;top:936px;font-size:19.3px;color:#333333;">20</div><div class="r" style="left:0px;top:986px;width:39px;height:1px;background:#dedede;"></div><div class="t" style="left:9.64px;top:964px;font-size:19.3px;color:#333333;">21</div><div class="r" style="left:0px;top:1014px;width:39px;height:1px;background:#dedede;"></div><div class="t" style="left:9.64px;top:992px;font-size:19.3px;color:#333333;">22</div><div class="r" style="left:0px;top:1042px;width:39px;height:1px;background:#dedede;"></div><div class="t" style="left:9.64px;top:1020px;font-size:19.3px;color:#333333;">23</div><div class="r" style="left:0px;top:1070px;width:39px;height:1px;background:#dedede;"></div><div class="t" style="left:9.14px;top:1048px;font-size:19.3px;color:#333333;">24</div><div class="r" style="left:0px;top:1098px;width:39px;height:1px;background:#dedede;"></div><div class="t" style="left:9.64px;top:1076px;font-size:19.3px;color:#333333;">25</div><div class="r" style="left:0px;top:1126px;width:39px;height:1px;background:#dedede;"></div><div class="t" style="left:9.64px;top:1104px;font-size:19.3px;color:#333333;">26</div><div class="r" style="left:0px;top:1154px;width:39px;height:1px;background:#dedede;"></div><div class="t" style="left:9.64px;top:1132px;font-size:19.3px;color:#333333;">27</div><div class="r" style="left:0px;top:1182px;width:39px;height:1px;background:#dedede;"></div><div class="t" style="left:9.64px;top:1160px;font-size:19.3px;color:#333333;">28</div><div class="r" style="left:0px;top:1210px;width:39px;height:1px;background:#dedede;"></div><div class="t" style="left:9.64px;top:1188px;font-size:19.3px;color:#333333;">29</div><div class="r" style="left:0px;top:1238px;width:39px;height:1px;background:#dedede;"></div><div class="t" style="left:9.64px;top:1216px;font-size:19.3px;color:#333333;">30</div><div class="r" style="left:0px;top:1266px;width:39px;height:1px;background:#dedede;"></div><div class="t" style="left:9.64px;top:1244px;font-size:19.3px;color:#333333;">31</div><div class="r" style="left:0px;top:1294px;width:39px;height:1px;background:#dedede;"></div><div class="t" style="left:9.64px;top:1272px;font-size:19.3px;color:#333333;">32</div><div class="r" style="left:0px;top:1322px;width:39px;height:1px;background:#dedede;"></div><div class="t" style="left:9.64px;top:1300px;font-size:19.3px;color:#333333;">33</div><div class="r" style="left:0px;top:1350px;width:39px;height:1px;background:#dedede;"></div><div class="t" style="left:9.14px;top:1328px;font-size:19.3px;color:#333333;">34</div><div class="r" style="left:0px;top:1378px;width:39px;height:1px;background:#dedede;"></div><div class="t" style="left:9.64px;top:1356px;font-size:19.3px;color:#333333;">35</div><div class="r" style="left:0px;top:1406px;width:39px;height:1px;background:#dedede;"></div><div class="t" style="left:9.64px;top:1384px;font-size:19.3px;color:#333333;">36</div><div class="r" style="left:0px;top:1434px;width:39px;height:1px;background:#dedede;"></div><div class="t" style="left:9.64px;top:1412px;font-size:19.3px;color:#333333;">37</div><div class="r" style="left:0px;top:1435px;width:39px;height:12px;background:#e1e1e1;"></div><div class="r" style="left:37px;top:1435px;width:2px;height:12px;background:#0b6a35;"></div><div class="t" style="left:9.64px;top:1440px;font-size:19.3px;color:#0b6a35;">38</div><div class="r" style="left:0;top:1447px;width:39px;height:0"></div><div class="t" style="left:43.25px;top:370px;font-size:50px;color:#000000;font-weight:700;transform:scaleX(0.9261);transform-origin:0 0;text-shadow:1.5px 1.5px 2.5px rgba(0,0,0,0.33);">COMPRA DE DIESEL - INTERNO</div><div class="r" style="left:59px;top:432px;width:2179px;height:50px;background:#166083;"></div><div class="r" style="left:2007px;top:482px;width:231px;height:700px;background:#f2f2f2;"></div><div class="r" style="left:59px;top:432px;width:2180px;height:1px;background:#000000;"></div><div class="r" style="left:59px;top:482px;width:2180px;height:1px;background:#000000;"></div><div class="r" style="left:59px;top:510px;width:2180px;height:1px;background:#000000;"></div><div class="r" style="left:59px;top:538px;width:2180px;height:1px;background:#000000;"></div><div class="r" style="left:59px;top:566px;width:2180px;height:1px;background:#000000;"></div><div class="r" style="left:59px;top:594px;width:2180px;height:1px;background:#000000;"></div><div class="r" style="left:59px;top:622px;width:2180px;height:1px;background:#000000;"></div><div class="r" style="left:59px;top:650px;width:2180px;height:1px;background:#000000;"></div><div class="r" style="left:59px;top:678px;width:2180px;height:1px;background:#000000;"></div><div class="r" style="left:59px;top:706px;width:2180px;height:1px;background:#000000;"></div><div class="r" style="left:59px;top:734px;width:2180px;height:1px;background:#000000;"></div><div class="r" style="left:59px;top:762px;width:2180px;height:1px;background:#000000;"></div><div class="r" style="left:59px;top:790px;width:2180px;height:1px;background:#000000;"></div><div class="r" style="left:59px;top:818px;width:2180px;height:1px;background:#000000;"></div><div class="r" style="left:59px;top:846px;width:2180px;height:1px;background:#000000;"></div><div class="r" style="left:59px;top:874px;width:2180px;height:1px;background:#000000;"></div><div class="r" style="left:59px;top:902px;width:2180px;height:1px;background:#000000;"></div><div class="r" style="left:59px;top:930px;width:2180px;height:1px;background:#000000;"></div><div class="r" style="left:59px;top:958px;width:2180px;height:1px;background:#000000;"></div><div class="r" style="left:59px;top:986px;width:2180px;height:1px;background:#000000;"></div><div class="r" style="left:59px;top:1014px;width:2180px;height:1px;background:#000000;"></div><div class="r" style="left:59px;top:1042px;width:2180px;height:1px;background:#000000;"></div><div class="r" style="left:59px;top:1070px;width:2180px;height:1px;background:#000000;"></div><div class="r" style="left:59px;top:1098px;width:2180px;height:1px;background:#000000;"></div><div class="r" style="left:59px;top:1126px;width:2180px;height:1px;background:#000000;"></div><div class="r" style="left:59px;top:1154px;width:2180px;height:1px;background:#000000;"></div><div class="r" style="left:59px;top:1182px;width:2180px;height:1px;background:#000000;"></div><div class="r" style="left:59px;top:432px;width:1px;height:751px;background:#000000;"></div><div class="r" style="left:296px;top:432px;width:1px;height:751px;background:#000000;"></div><div class="r" style="left:498px;top:432px;width:1px;height:751px;background:#000000;"></div><div class="r" style="left:1089px;top:432px;width:1px;height:751px;background:#000000;"></div><div class="r" style="left:1531px;top:432px;width:1px;height:751px;background:#000000;"></div><div class="r" style="left:1759px;top:432px;width:1px;height:751px;background:#000000;"></div><div class="r" style="left:2007px;top:432px;width:1px;height:751px;background:#000000;"></div><div class="r" style="left:2238px;top:432px;width:1px;height:751px;background:#000000;"></div><div class="r" style="left:2233px;top:1177px;width:6px;height:6px;background:#2b5cb8;"></div><div class="t" style="left:79.90px;top:449px;font-size:21.3px;color:#ffffff;font-weight:700;">Dt. do Faturamento</div><div class="t" style="left:331.24px;top:449px;font-size:21.3px;color:#ffffff;font-weight:700;">Data Entrada</div><div class="t" style="left:735.07px;top:449px;font-size:21.3px;color:#ffffff;font-weight:700;">Fornecedor</div><div class="t" style="left:1259.10px;top:449px;font-size:21.3px;color:#ffffff;font-weight:700;">Descrição</div><div class="t" style="left:1592.76px;top:449px;font-size:21.3px;color:#ffffff;font-weight:700;">Valor Nota</div><div class="t" style="left:1771.00px;top:449px;font-size:21.3px;color:#ffffff;font-weight:700;">Valor Unitário Compra</div><div class="t" style="left:2093.34px;top:449px;font-size:21.3px;color:#ffffff;font-weight:700;">Litros</div><div class="t" style="left:94.52px;top:488px;font-size:21.3px;color:#000;">09/01/2025 00:00</div><div class="t" style="left:344.63px;top:488px;font-size:21.3px;color:#000;">09/01/2025</div><div class="t" style="left:532.51px;top:488px;font-size:21.3px;color:#000;letter-spacing:0.62px;">SP INDUSTRIA E DISTRIBUIDORA DE PETROLEO</div><div class="t" style="left:1134.38px;top:488px;font-size:21.3px;color:#000;letter-spacing:0.62px;">COMBUSTIVEL INTERNO- DIESEL</div><div class="t" style="left:1544.80px;top:488px;font-size:21.3px;color:#000;">R$</div><div class="t" style="left:1653.50px;top:488px;font-size:21.3px;color:#000;">27.794,00</div><div class="t" style="left:1770.80px;top:488px;font-size:21.3px;color:#000;">R$</div><div class="t" style="left:1955.39px;top:488px;font-size:21.3px;color:#000;">5,56</div><div class="t" style="left:2081.47px;top:488px;font-size:21.3px;color:#000;">4.998,92</div><div class="t" style="left:94.02px;top:516px;font-size:21.3px;color:#000;">28/01/2025 00:00</div><div class="t" style="left:344.13px;top:516px;font-size:21.3px;color:#000;">28/01/2025</div><div class="t" style="left:532.51px;top:516px;font-size:21.3px;color:#000;letter-spacing:0.62px;">SP INDUSTRIA E DISTRIBUIDORA DE PETROLEO</div><div class="t" style="left:1134.38px;top:516px;font-size:21.3px;color:#000;letter-spacing:0.62px;">COMBUSTIVEL INTERNO- DIESEL</div><div class="t" style="left:1544.80px;top:516px;font-size:21.3px;color:#000;">R$</div><div class="t" style="left:1653.50px;top:516px;font-size:21.3px;color:#000;">28.224,00</div><div class="t" style="left:1770.80px;top:516px;font-size:21.3px;color:#000;">R$</div><div class="t" style="left:1954.39px;top:516px;font-size:21.3px;color:#000;">5,64</div><div class="t" style="left:2081.47px;top:516px;font-size:21.3px;color:#000;">5.004,26</div><div class="t" style="left:94.02px;top:544px;font-size:21.3px;color:#000;">10/02/2025 00:00</div><div class="t" style="left:344.13px;top:544px;font-size:21.3px;color:#000;">10/02/2025</div><div class="t" style="left:724.45px;top:544px;font-size:21.3px;color:#000;letter-spacing:0.62px;">PETROTUDO</div><div class="t" style="left:1134.38px;top:544px;font-size:21.3px;color:#000;letter-spacing:0.62px;">COMBUSTIVEL INTERNO- DIESEL</div><div class="t" style="left:1544.80px;top:544px;font-size:21.3px;color:#000;">R$</div><div class="t" style="left:1653.50px;top:544px;font-size:21.3px;color:#000;">29.350,00</div><div class="t" style="left:1770.80px;top:544px;font-size:21.3px;color:#000;">R$</div><div class="t" style="left:1955.39px;top:544px;font-size:21.3px;color:#000;">5,87</div><div class="t" style="left:2080.97px;top:544px;font-size:21.3px;color:#000;">5.000,00</div><div class="t" style="left:94.02px;top:572px;font-size:21.3px;color:#000;">25/02/2025 00:00</div><div class="t" style="left:344.13px;top:572px;font-size:21.3px;color:#000;">25/02/2025</div><div class="t" style="left:724.45px;top:572px;font-size:21.3px;color:#000;letter-spacing:0.62px;">PETROTUDO</div><div class="t" style="left:1134.38px;top:572px;font-size:21.3px;color:#000;letter-spacing:0.62px;">COMBUSTIVEL INTERNO- DIESEL</div><div class="t" style="left:1544.80px;top:572px;font-size:21.3px;color:#000;">R$</div><div class="t" style="left:1653.50px;top:572px;font-size:21.3px;color:#000;">28.700,00</div><div class="t" style="left:1770.80px;top:572px;font-size:21.3px;color:#000;">R$</div><div class="t" style="left:1954.39px;top:572px;font-size:21.3px;color:#000;">5,74</div><div class="t" style="left:2080.97px;top:572px;font-size:21.3px;color:#000;">5.000,00</div><div class="t" style="left:94.02px;top:600px;font-size:21.3px;color:#000;">10/03/2025 00:00</div><div class="t" style="left:344.13px;top:600px;font-size:21.3px;color:#000;">10/03/2025</div><div class="t" style="left:724.45px;top:600px;font-size:21.3px;color:#000;letter-spacing:0.62px;">PETROTUDO</div><div class="t" style="left:1134.38px;top:600px;font-size:21.3px;color:#000;letter-spacing:0.62px;">COMBUSTIVEL INTERNO- DIESEL</div><div class="t" style="left:1544.80px;top:600px;font-size:21.3px;color:#000;">R$</div><div class="t" style="left:1653.50px;top:600px;font-size:21.3px;color:#000;">28.125,00</div><div class="t" style="left:1770.80px;top:600px;font-size:21.3px;color:#000;">R$</div><div class="t" style="left:1955.39px;top:600px;font-size:21.3px;color:#000;">5,63</div><div class="t" style="left:2081.47px;top:600px;font-size:21.3px;color:#000;">4.995,56</div><div class="t" style="left:94.02px;top:628px;font-size:21.3px;color:#000;">26/03/2025 00:00</div><div class="t" style="left:344.13px;top:628px;font-size:21.3px;color:#000;">26/03/2025</div><div class="t" style="left:532.51px;top:628px;font-size:21.3px;color:#000;letter-spacing:0.62px;">SP INDUSTRIA E DISTRIBUIDORA DE PETROLEO</div><div class="t" style="left:1134.38px;top:628px;font-size:21.3px;color:#000;letter-spacing:0.62px;">COMBUSTIVEL INTERNO- DIESEL</div><div class="t" style="left:1544.80px;top:628px;font-size:21.3px;color:#000;">R$</div><div class="t" style="left:1653.50px;top:628px;font-size:21.3px;color:#000;">27.461,50</div><div class="t" style="left:1770.80px;top:628px;font-size:21.3px;color:#000;">R$</div><div class="t" style="left:1955.39px;top:628px;font-size:21.3px;color:#000;">5,49</div><div class="t" style="left:2081.47px;top:628px;font-size:21.3px;color:#000;">5.002,09</div><div class="t" style="left:94.02px;top:656px;font-size:21.3px;color:#000;">14/04/2025 00:00</div><div class="t" style="left:344.13px;top:656px;font-size:21.3px;color:#000;">14/04/2025</div><div class="t" style="left:532.51px;top:656px;font-size:21.3px;color:#000;letter-spacing:0.62px;">SP INDUSTRIA E DISTRIBUIDORA DE PETROLEO</div><div class="t" style="left:1134.38px;top:656px;font-size:21.3px;color:#000;letter-spacing:0.62px;">COMBUSTIVEL INTERNO- DIESEL</div><div class="t" style="left:1544.80px;top:656px;font-size:21.3px;color:#000;">R$</div><div class="t" style="left:1653.50px;top:656px;font-size:21.3px;color:#000;">26.678,00</div><div class="t" style="left:1770.80px;top:656px;font-size:21.3px;color:#000;">R$</div><div class="t" style="left:1954.39px;top:656px;font-size:21.3px;color:#000;">5,34</div><div class="t" style="left:2081.47px;top:656px;font-size:21.3px;color:#000;">4.995,88</div><div class="t" style="left:94.02px;top:684px;font-size:21.3px;color:#000;">27/04/2025 00:00</div><div class="t" style="left:344.13px;top:684px;font-size:21.3px;color:#000;">27/04/2025</div><div class="t" style="left:724.45px;top:684px;font-size:21.3px;color:#000;letter-spacing:0.62px;">PETROTUDO</div><div class="t" style="left:1134.38px;top:684px;font-size:21.3px;color:#000;letter-spacing:0.62px;">COMBUSTIVEL INTERNO- DIESEL</div><div class="t" style="left:1544.80px;top:684px;font-size:21.3px;color:#000;">R$</div><div class="t" style="left:1653.50px;top:684px;font-size:21.3px;color:#000;">26.250,00</div><div class="t" style="left:1770.80px;top:684px;font-size:21.3px;color:#000;">R$</div><div class="t" style="left:1955.39px;top:684px;font-size:21.3px;color:#000;">5,25</div><div class="t" style="left:2080.97px;top:684px;font-size:21.3px;color:#000;">5.000,00</div><div class="t" style="left:94.02px;top:712px;font-size:21.3px;color:#000;">12/05/2025 00:00</div><div class="t" style="left:344.13px;top:712px;font-size:21.3px;color:#000;">12/05/2025</div><div class="t" style="left:532.51px;top:712px;font-size:21.3px;color:#000;letter-spacing:0.62px;">SP INDUSTRIA E DISTRIBUIDORA DE PETROLEO</div><div class="t" style="left:1134.38px;top:712px;font-size:21.3px;color:#000;letter-spacing:0.62px;">COMBUSTIVEL INTERNO- DIESEL</div><div class="t" style="left:1544.80px;top:712px;font-size:21.3px;color:#000;">R$</div><div class="t" style="left:1653.50px;top:712px;font-size:21.3px;color:#000;">25.837,50</div><div class="t" style="left:1770.80px;top:712px;font-size:21.3px;color:#000;">R$</div><div class="t" style="left:1955.39px;top:712px;font-size:21.3px;color:#000;">5,17</div><div class="t" style="left:2081.47px;top:712px;font-size:21.3px;color:#000;">4.997,58</div><div class="t" style="left:94.02px;top:740px;font-size:21.3px;color:#000;">22/05/2025 00:00</div><div class="t" style="left:344.13px;top:740px;font-size:21.3px;color:#000;">22/05/2025</div><div class="t" style="left:724.45px;top:740px;font-size:21.3px;color:#000;letter-spacing:0.62px;">PETROTUDO</div><div class="t" style="left:1134.38px;top:740px;font-size:21.3px;color:#000;letter-spacing:0.62px;">COMBUSTIVEL INTERNO- DIESEL</div><div class="t" style="left:1544.80px;top:740px;font-size:21.3px;color:#000;">R$</div><div class="t" style="left:1653.50px;top:740px;font-size:21.3px;color:#000;">25.600,00</div><div class="t" style="left:1770.80px;top:740px;font-size:21.3px;color:#000;">R$</div><div class="t" style="left:1955.39px;top:740px;font-size:21.3px;color:#000;">5,12</div><div class="t" style="left:2080.97px;top:740px;font-size:21.3px;color:#000;">5.000,00</div><div class="t" style="left:94.52px;top:768px;font-size:21.3px;color:#000;">06/06/2025 00:00</div><div class="t" style="left:344.63px;top:768px;font-size:21.3px;color:#000;">06/06/2025</div><div class="t" style="left:532.51px;top:768px;font-size:21.3px;color:#000;letter-spacing:0.62px;">SP INDUSTRIA E DISTRIBUIDORA DE PETROLEO</div><div class="t" style="left:1134.38px;top:768px;font-size:21.3px;color:#000;letter-spacing:0.62px;">COMBUSTIVEL INTERNO- DIESEL</div><div class="t" style="left:1544.80px;top:768px;font-size:21.3px;color:#000;">R$</div><div class="t" style="left:1653.50px;top:768px;font-size:21.3px;color:#000;">25.378,50</div><div class="t" style="left:1770.80px;top:768px;font-size:21.3px;color:#000;">R$</div><div class="t" style="left:1955.39px;top:768px;font-size:21.3px;color:#000;">5,08</div><div class="t" style="left:2081.47px;top:768px;font-size:21.3px;color:#000;">4.995,77</div><div class="t" style="left:94.02px;top:796px;font-size:21.3px;color:#000;">25/06/2025 00:00</div><div class="t" style="left:344.13px;top:796px;font-size:21.3px;color:#000;">25/06/2025</div><div class="t" style="left:724.45px;top:796px;font-size:21.3px;color:#000;letter-spacing:0.62px;">PETROTUDO</div><div class="t" style="left:1134.38px;top:796px;font-size:21.3px;color:#000;letter-spacing:0.62px;">COMBUSTIVEL INTERNO- DIESEL</div><div class="t" style="left:1544.80px;top:796px;font-size:21.3px;color:#000;">R$</div><div class="t" style="left:1653.50px;top:796px;font-size:21.3px;color:#000;">27.200,00</div><div class="t" style="left:1770.80px;top:796px;font-size:21.3px;color:#000;">R$</div><div class="t" style="left:1954.39px;top:796px;font-size:21.3px;color:#000;">5,44</div><div class="t" style="left:2080.97px;top:796px;font-size:21.3px;color:#000;">5.000,00</div><div class="t" style="left:94.02px;top:824px;font-size:21.3px;color:#000;">15/07/2025 00:00</div><div class="t" style="left:344.13px;top:824px;font-size:21.3px;color:#000;">15/07/2025</div><div class="t" style="left:532.51px;top:824px;font-size:21.3px;color:#000;letter-spacing:0.62px;">SP INDUSTRIA E DISTRIBUIDORA DE PETROLEO</div><div class="t" style="left:1134.38px;top:824px;font-size:21.3px;color:#000;letter-spacing:0.62px;">COMBUSTIVEL INTERNO- DIESEL</div><div class="t" style="left:1544.80px;top:824px;font-size:21.3px;color:#000;">R$</div><div class="t" style="left:1653.50px;top:824px;font-size:21.3px;color:#000;">26.348,00</div><div class="t" style="left:1770.80px;top:824px;font-size:21.3px;color:#000;">R$</div><div class="t" style="left:1955.39px;top:824px;font-size:21.3px;color:#000;">5,27</div><div class="t" style="left:2081.47px;top:824px;font-size:21.3px;color:#000;">4.999,62</div><div class="t" style="left:94.02px;top:852px;font-size:21.3px;color:#000;">28/07/2025 00:00</div><div class="t" style="left:344.13px;top:852px;font-size:21.3px;color:#000;">28/07/2025</div><div class="t" style="left:532.51px;top:852px;font-size:21.3px;color:#000;letter-spacing:0.62px;">SP INDUSTRIA E DISTRIBUIDORA DE PETROLEO</div><div class="t" style="left:1134.38px;top:852px;font-size:21.3px;color:#000;letter-spacing:0.62px;">COMBUSTIVEL INTERNO- DIESEL</div><div class="t" style="left:1544.80px;top:852px;font-size:21.3px;color:#000;">R$</div><div class="t" style="left:1653.50px;top:852px;font-size:21.3px;color:#000;">26.674,00</div><div class="t" style="left:1770.80px;top:852px;font-size:21.3px;color:#000;">R$</div><div class="t" style="left:1955.39px;top:852px;font-size:21.3px;color:#000;">5,33</div><div class="t" style="left:2080.97px;top:852px;font-size:21.3px;color:#000;">5.004,50</div><div class="t" style="left:94.52px;top:880px;font-size:21.3px;color:#000;">06/08/2025 00:00</div><div class="t" style="left:344.63px;top:880px;font-size:21.3px;color:#000;">06/08/2025</div><div class="t" style="left:532.51px;top:880px;font-size:21.3px;color:#000;letter-spacing:0.62px;">SP INDUSTRIA E DISTRIBUIDORA DE PETROLEO</div><div class="t" style="left:1134.38px;top:880px;font-size:21.3px;color:#000;letter-spacing:0.62px;">COMBUSTIVEL INTERNO- DIESEL</div><div class="t" style="left:1544.80px;top:880px;font-size:21.3px;color:#000;">R$</div><div class="t" style="left:1653.50px;top:880px;font-size:21.3px;color:#000;">27.175,00</div><div class="t" style="left:1770.80px;top:880px;font-size:21.3px;color:#000;">R$</div><div class="t" style="left:1954.39px;top:880px;font-size:21.3px;color:#000;">5,44</div><div class="t" style="left:2080.97px;top:880px;font-size:21.3px;color:#000;">4.995,40</div><div class="t" style="left:94.02px;top:908px;font-size:21.3px;color:#000;">21/08/2025 00:00</div><div class="t" style="left:344.13px;top:908px;font-size:21.3px;color:#000;">26/08/2025</div><div class="t" style="left:724.45px;top:908px;font-size:21.3px;color:#000;letter-spacing:0.62px;">PETROTUDO</div><div class="t" style="left:1134.38px;top:908px;font-size:21.3px;color:#000;letter-spacing:0.62px;">COMBUSTIVEL INTERNO- DIESEL</div><div class="t" style="left:1544.80px;top:908px;font-size:21.3px;color:#000;">R$</div><div class="t" style="left:1653.50px;top:908px;font-size:21.3px;color:#000;">26.725,00</div><div class="t" style="left:1770.80px;top:908px;font-size:21.3px;color:#000;">R$</div><div class="t" style="left:1955.39px;top:908px;font-size:21.3px;color:#000;">5,35</div><div class="t" style="left:2081.47px;top:908px;font-size:21.3px;color:#000;">4.995,33</div><div class="t" style="left:94.52px;top:936px;font-size:21.3px;color:#000;">01/09/2025 00:00</div><div class="t" style="left:344.63px;top:936px;font-size:21.3px;color:#000;">03/09/2025</div><div class="t" style="left:724.45px;top:936px;font-size:21.3px;color:#000;letter-spacing:0.62px;">PETROTUDO</div><div class="t" style="left:1134.38px;top:936px;font-size:21.3px;color:#000;letter-spacing:0.62px;">COMBUSTIVEL INTERNO- DIESEL</div><div class="t" style="left:1544.80px;top:936px;font-size:21.3px;color:#000;">R$</div><div class="t" style="left:1653.50px;top:936px;font-size:21.3px;color:#000;">26.750,00</div><div class="t" style="left:1770.80px;top:936px;font-size:21.3px;color:#000;">R$</div><div class="t" style="left:1955.39px;top:936px;font-size:21.3px;color:#000;">5,35</div><div class="t" style="left:2080.97px;top:936px;font-size:21.3px;color:#000;">5.000,00</div><div class="t" style="left:94.02px;top:964px;font-size:21.3px;color:#000;">21/09/2025 00:00</div><div class="t" style="left:344.13px;top:964px;font-size:21.3px;color:#000;">23/09/2025</div><div class="t" style="left:724.45px;top:964px;font-size:21.3px;color:#000;letter-spacing:0.62px;">PETROTUDO</div><div class="t" style="left:1134.38px;top:964px;font-size:21.3px;color:#000;letter-spacing:0.62px;">COMBUSTIVEL INTERNO- DIESEL</div><div class="t" style="left:1544.80px;top:964px;font-size:21.3px;color:#000;">R$</div><div class="t" style="left:1653.50px;top:964px;font-size:21.3px;color:#000;">26.625,00</div><div class="t" style="left:1770.80px;top:964px;font-size:21.3px;color:#000;">R$</div><div class="t" style="left:1955.39px;top:964px;font-size:21.3px;color:#000;">5,33</div><div class="t" style="left:2081.47px;top:964px;font-size:21.3px;color:#000;">4.995,31</div><div class="t" style="left:94.52px;top:992px;font-size:21.3px;color:#000;">03/10/2025 00:00</div><div class="t" style="left:344.63px;top:992px;font-size:21.3px;color:#000;">07/10/2025</div><div class="t" style="left:532.59px;top:992px;font-size:21.3px;color:#000;letter-spacing:0.74px;">CAVALO MARINHO COMBUSTIVEIS CEARA LTDA</div><div class="t" style="left:1134.38px;top:992px;font-size:21.3px;color:#000;letter-spacing:0.62px;">COMBUSTIVEL INTERNO- DIESEL</div><div class="t" style="left:1544.80px;top:992px;font-size:21.3px;color:#000;">R$</div><div class="t" style="left:1653.50px;top:992px;font-size:21.3px;color:#000;">26.850,00</div><div class="t" style="left:1770.80px;top:992px;font-size:21.3px;color:#000;">R$</div><div class="t" style="left:1955.39px;top:992px;font-size:21.3px;color:#000;">5,37</div><div class="t" style="left:2080.97px;top:992px;font-size:21.3px;color:#000;">5.000,00</div><div class="t" style="left:94.02px;top:1020px;font-size:21.3px;color:#000;">22/10/2025 00:00</div><div class="t" style="left:344.13px;top:1020px;font-size:21.3px;color:#000;">24/10/2025</div><div class="t" style="left:724.45px;top:1020px;font-size:21.3px;color:#000;letter-spacing:0.62px;">PETROTUDO</div><div class="t" style="left:1134.38px;top:1020px;font-size:21.3px;color:#000;letter-spacing:0.62px;">COMBUSTIVEL INTERNO- DIESEL</div><div class="t" style="left:1544.80px;top:1020px;font-size:21.3px;color:#000;">R$</div><div class="t" style="left:1653.50px;top:1020px;font-size:21.3px;color:#000;">26.500,00</div><div class="t" style="left:1770.80px;top:1020px;font-size:21.3px;color:#000;">R$</div><div class="t" style="left:1954.39px;top:1020px;font-size:21.3px;color:#000;">5,30</div><div class="t" style="left:2080.97px;top:1020px;font-size:21.3px;color:#000;">5.000,00</div><div class="t" style="left:95.31px;top:1048px;font-size:21.3px;color:#000;">06/11/2025 00:00</div><div class="t" style="left:345.42px;top:1048px;font-size:21.3px;color:#000;">07/11/2025</div><div class="t" style="left:724.45px;top:1048px;font-size:21.3px;color:#000;letter-spacing:0.62px;">PETROTUDO</div><div class="t" style="left:1134.38px;top:1048px;font-size:21.3px;color:#000;letter-spacing:0.62px;">COMBUSTIVEL INTERNO- DIESEL</div><div class="t" style="left:1544.80px;top:1048px;font-size:21.3px;color:#000;">R$</div><div class="t" style="left:1653.50px;top:1048px;font-size:21.3px;color:#000;">26.890,00</div><div class="t" style="left:1770.80px;top:1048px;font-size:21.3px;color:#000;">R$</div><div class="t" style="left:1955.39px;top:1048px;font-size:21.3px;color:#000;">5,38</div><div class="t" style="left:2080.97px;top:1048px;font-size:21.3px;color:#000;">4.998,14</div><div class="t" style="left:94.81px;top:1076px;font-size:21.3px;color:#000;">23/11/2025 00:00</div><div class="t" style="left:344.92px;top:1076px;font-size:21.3px;color:#000;">24/11/2025</div><div class="t" style="left:724.45px;top:1076px;font-size:21.3px;color:#000;letter-spacing:0.62px;">PETROTUDO</div><div class="t" style="left:1134.38px;top:1076px;font-size:21.3px;color:#000;letter-spacing:0.62px;">COMBUSTIVEL INTERNO- DIESEL</div><div class="t" style="left:1544.80px;top:1076px;font-size:21.3px;color:#000;">R$</div><div class="t" style="left:1653.50px;top:1076px;font-size:21.3px;color:#000;">27.200,00</div><div class="t" style="left:1770.80px;top:1076px;font-size:21.3px;color:#000;">R$</div><div class="t" style="left:1954.39px;top:1076px;font-size:21.3px;color:#000;">5,44</div><div class="t" style="left:2080.97px;top:1076px;font-size:21.3px;color:#000;">5.000,00</div><div class="t" style="left:94.52px;top:1104px;font-size:21.3px;color:#000;">04/12/2025 00:00</div><div class="t" style="left:344.63px;top:1104px;font-size:21.3px;color:#000;">05/12/2025</div><div class="t" style="left:739.69px;top:1104px;font-size:21.3px;color:#000;letter-spacing:0.62px;">TETRAOIL</div><div class="t" style="left:1134.38px;top:1104px;font-size:21.3px;color:#000;letter-spacing:0.62px;">COMBUSTIVEL INTERNO- DIESEL</div><div class="t" style="left:1544.80px;top:1104px;font-size:21.3px;color:#000;">R$</div><div class="t" style="left:1653.50px;top:1104px;font-size:21.3px;color:#000;">27.085,00</div><div class="t" style="left:1770.80px;top:1104px;font-size:21.3px;color:#000;">R$</div><div class="t" style="left:1955.39px;top:1104px;font-size:21.3px;color:#000;">5,42</div><div class="t" style="left:2081.47px;top:1104px;font-size:21.3px;color:#000;">4.997,23</div><div class="t" style="left:94.02px;top:1132px;font-size:21.3px;color:#000;">24/12/2025 00:00</div><div class="t" style="left:344.13px;top:1132px;font-size:21.3px;color:#000;">24/12/2025</div><div class="t" style="left:739.69px;top:1132px;font-size:21.3px;color:#000;letter-spacing:0.62px;">TETRAOIL</div><div class="t" style="left:1134.38px;top:1132px;font-size:21.3px;color:#000;letter-spacing:0.62px;">COMBUSTIVEL INTERNO- DIESEL</div><div class="t" style="left:1544.80px;top:1132px;font-size:21.3px;color:#000;">R$</div><div class="t" style="left:1653.50px;top:1132px;font-size:21.3px;color:#000;">26.700,00</div><div class="t" style="left:1770.80px;top:1132px;font-size:21.3px;color:#000;">R$</div><div class="t" style="left:1954.39px;top:1132px;font-size:21.3px;color:#000;">5,34</div><div class="t" style="left:2080.97px;top:1132px;font-size:21.3px;color:#000;">5.000,00</div><div class="t" style="left:94.02px;top:1160px;font-size:21.3px;color:#000;">29/12/2025 00:00</div><div class="t" style="left:344.63px;top:1160px;font-size:21.3px;color:#000;">30/12/2025</div><div class="t" style="left:724.45px;top:1160px;font-size:21.3px;color:#000;letter-spacing:0.62px;">PETROTUDO</div><div class="t" style="left:1134.38px;top:1160px;font-size:21.3px;color:#000;letter-spacing:0.62px;">COMBUSTIVEL INTERNO- DIESEL</div><div class="t" style="left:1544.80px;top:1160px;font-size:21.3px;color:#000;">R$</div><div class="t" style="left:1653.50px;top:1160px;font-size:21.3px;color:#000;">26.525,00</div><div class="t" style="left:1770.80px;top:1160px;font-size:21.3px;color:#000;">R$</div><div class="t" style="left:1955.39px;top:1160px;font-size:21.3px;color:#000;">5,31</div><div class="t" style="left:2081.47px;top:1160px;font-size:21.3px;color:#000;">4.995,29</div><div class="r" style="left:1088px;top:1433px;width:444px;height:30px;border:2px solid #107c41;box-sizing:border-box;"></div><div class="r" style="left:2529px;top:324px;width:31px;height:1123px;background:linear-gradient(90deg,#e5e8eb,#e3e9ec);"></div><div class="r" style="left:2532px;top:324px;width:26px;height:1123px;border-radius:13px;background:#f5f5f5;"></div><svg class="s" style="left:2537px;top:331px;" width="16" height="12" viewBox="0 0 16 12"><path d="M8 1.5 L14.5 10.5 H1.5 Z" fill="#707070" stroke="#707070" stroke-width="1.5" stroke-linejoin="round"/></svg><div class="r" style="left:2539px;top:350px;width:12px;height:1058px;border-radius:6px;background:#707070;"></div><svg class="s" style="left:2537px;top:1431px;" width="16" height="12" viewBox="0 0 16 12"><path d="M8 10.5 L14.5 1.5 H1.5 Z" fill="#707070" stroke="#707070" stroke-width="1.5" stroke-linejoin="round"/></svg><div class="r" style="left:0px;top:1447px;width:2560px;height:48px;background:linear-gradient(90deg,#ebe6e4 0%,#eae6e5 35%,#e4e7ea 52%,#e3e8eb 100%);"></div><div class="r" style="left:1035px;top:1447px;width:330px;height:12px;background:#ffffff;"></div><div class="r" style="left:0;top:1447px;width:1047px;height:48px;background:linear-gradient(90deg,#ebe6e4 0%,#eae6e5 35%,#e4e7ea 52%,#e3e8eb 100%);background-size:2560px 48px;border-top-right-radius:8px;"></div><div class="r" style="left:1354px;top:1447px;width:1206px;height:48px;background:linear-gradient(90deg,#ebe6e4 0%,#eae6e5 35%,#e4e7ea 52%,#e3e8eb 100%);background-size:2560px 48px;background-position:-1354px 0;border-top-left-radius:8px;"></div><div class="r" style="left:1047px;top:1447px;width:307px;height:42px;background:#ffffff;border-bottom-left-radius:7px;border-bottom-right-radius:7px;"></div><svg class="s" style="left:33px;top:1461px;" width="13" height="18" viewBox="0 0 13 18"><path d="M10.5 1.5 L2.5 8.5 L10.5 15.5" fill="none" stroke="#8c8c8c" stroke-width="1.6"/></svg><svg class="s" style="left:82px;top:1461px;" width="13" height="18" viewBox="0 0 13 18"><path d="M2.5 1.5 L10.5 8.5 L2.5 15.5" fill="none" stroke="#8c8c8c" stroke-width="1.6"/></svg><div class="t" style="left:180.70px;top:1463px;font-size:20.0px;color:#242424;">Cadastros</div><div class="r" style="left:293px;top:1457px;width:1px;height:28px;background:#c9c9c9;"></div><div class="t" style="left:321.60px;top:1465px;font-size:18.9px;color:#242424;">CONTROLE DE FROTA EXTERNO</div><div class="r" style="left:646px;top:1457px;width:1px;height:28px;background:#c9c9c9;"></div><div class="t" style="left:676.30px;top:1464px;font-size:19.1px;color:#242424;">ABASTECIMENTO INTERNO - GERAL</div><div class="r" style="left:1041px;top:1457px;width:1px;height:28px;background:#c9c9c9;"></div><div class="t" style="left:1060.00px;top:1458px;font-size:20.2px;color:#1f1f1f;font-weight:700;">COMPRA INTERNO - DIESEL</div><div class="r" style="left:1060px;top:1482px;width:282px;height:3px;background:#107c41;border-radius:1.5px;"></div><div class="r" style="left:1359px;top:1457px;width:1px;height:28px;background:#c9c9c9;"></div><div class="t" style="left:1386.00px;top:1464px;font-size:19.5px;color:#242424;">COMPRA INTERNO - ARLA</div><div class="r" style="left:1666px;top:1457px;width:1px;height:28px;background:#c9c9c9;"></div><svg class="s" style="left:1728px;top:1461px;" width="19" height="18" viewBox="0 0 19 18"><path d="M9.5 0.5 V17.5 M1 9 H18" stroke="#242424" stroke-width="1.5"/></svg><div class="r" style="left:1847.5px;top:1464px;width:3px;height:3px;background:#333;border-radius:50%;"></div><div class="r" style="left:1847.5px;top:1470px;width:3px;height:3px;background:#333;border-radius:50%;"></div><div class="r" style="left:1847.5px;top:1476px;width:3px;height:3px;background:#333;border-radius:50%;"></div><div class="r" style="left:1874px;top:1457px;width:658px;height:26px;border-radius:13px;background:#f6f6f6;"></div><svg class="s" style="left:1880px;top:1463px;" width="13" height="14" viewBox="0 0 13 14"><path d="M11 1.5 V12.5 L2 7 Z" fill="#707070" stroke="#707070" stroke-width="1.5" stroke-linejoin="round"/></svg><div class="r" style="left:1900px;top:1464px;width:602px;height:12px;border-radius:6px;background:#707070;"></div><svg class="s" style="left:2512px;top:1463px;" width="13" height="14" viewBox="0 0 13 14"><path d="M2 1.5 V12.5 L11 7 Z" fill="#707070" stroke="#707070" stroke-width="1.5" stroke-linejoin="round"/></svg><div class="r" style="left:0px;top:1495px;width:2560px;height:33px;background:#f3f3f3;"></div><div class="t" style="left:15.60px;top:1504px;font-size:16.2px;color:#242424;">Pronto</div><svg class="s" style="left:92px;top:1503px;" width="23" height="20" viewBox="0 0 23 20"><path d="M1 19 V1.5 H21 V8" fill="none" stroke="#2b2b2b" stroke-width="1.5"/><path d="M1 5 H21" stroke="#2b2b2b" stroke-width="1.3"/>
<path d="M4 9 H10 M4 12.5 H8 M4 16 H8" stroke="#2b2b2b" stroke-width="1.2"/>
<circle cx="15.5" cy="13.5" r="5.7" fill="#f3f3f3" stroke="#2b2b2b" stroke-width="1.5"/><circle cx="15.5" cy="13.5" r="2.5" fill="#2b2b2b"/></svg><svg class="s" style="left:138px;top:1501px;" width="25" height="23" viewBox="0 0 25 23"><circle cx="9.5" cy="3.2" r="2.2" fill="none" stroke="#2b2b2b" stroke-width="1.4"/>
<path d="M1.5 7.5 Q5 5.5 9.5 7 Q14 5.5 17 7.5" fill="none" stroke="#2b2b2b" stroke-width="1.4"/>
<path d="M7 8 Q6 14 7.5 16 Q8 19 5 21.5 M12 8 V12" fill="none" stroke="#2b2b2b" stroke-width="1.4"/>
<path d="M11 17 L14 20.5 L22 12.5" fill="none" stroke="#2b2b2b" stroke-width="1.5"/></svg><div class="t" style="left:166.50px;top:1505px;font-size:15.35px;color:#242424;">Acessibilidade: tudo certo</div><svg class="s" style="left:1918px;top:1502px;" width="23" height="21" viewBox="0 0 23 21"><path d="M13 14 H1.5 V1.5 H19.5 V7" fill="none" stroke="#2b2b2b" stroke-width="1.4"/><path d="M5 16 V18" stroke="#2b2b2b" stroke-width="1.4"/>
<circle cx="15.5" cy="15" r="3" fill="none" stroke="#2b2b2b" stroke-width="1.5"/>
<g stroke="#2b2b2b" stroke-width="1.6"><path d="M15.5 9.5 V11.5 M15.5 18.5 V20.5 M10 15 H12 M19 15 H21 M11.6 11.1 L13 12.5 M18 17.5 L19.4 18.9 M19.4 11.1 L18 12.5 M13 17.5 L11.6 18.9"/></g></svg><div class="t" style="left:1943.30px;top:1505px;font-size:15.4px;color:#242424;">Exibir Configurações</div><div class="r" style="left:2114px;top:1496px;width:60px;height:32px;background:#e0e0e0;"></div><svg class="s" style="left:2133px;top:1501px;" width="22" height="21" viewBox="0 0 22 21"><g fill="none" stroke="#2b2b2b" stroke-width="1.5"><rect x="1.5" y="1.5" width="18" height="18"/><path d="M7.5 1.5 V19.5 M13.5 1.5 V19.5 M1.5 7.5 H19.5 M1.5 13.5 H19.5"/></g></svg><svg class="s" style="left:2192px;top:1501px;" width="24" height="21" viewBox="0 0 24 21"><g fill="none" stroke="#2b2b2b" stroke-width="1.5"><rect x="1.5" y="1.5" width="20" height="18"/><rect x="5.5" y="5" width="12" height="11"/><path d="M8 8.5 H15 M8 11 H15 M8 13.5 H15" stroke-width="1.2"/></g></svg><svg class="s" style="left:2252px;top:1501px;" width="24" height="21" viewBox="0 0 24 21"><g fill="none" stroke="#2b2b2b" stroke-width="1.5"><rect x="1.5" y="1.5" width="20" height="18"/><path d="M5.5 1.5 V11 H11.5 V1.5 M11.5 5 V1.5"/></g></svg><div class="r" style="left:2302px;top:1511px;width:12px;height:1.5px;background:#444;"></div><div class="r" style="left:2322px;top:1511px;width:147px;height:1.5px;background:#555;"></div><div class="r" style="left:2392px;top:1503px;width:8px;height:17px;background:#5a5a5a;border-radius:1px;"></div><svg class="s" style="left:2477px;top:1505px;" width="14" height="14" viewBox="0 0 14 14"><path d="M7 1 V13 M1 7 H13" stroke="#444" stroke-width="1.5"/></svg><div class="t" style="left:2508.00px;top:1505px;font-size:15.5px;color:#242424;">100%</div></body></html>
